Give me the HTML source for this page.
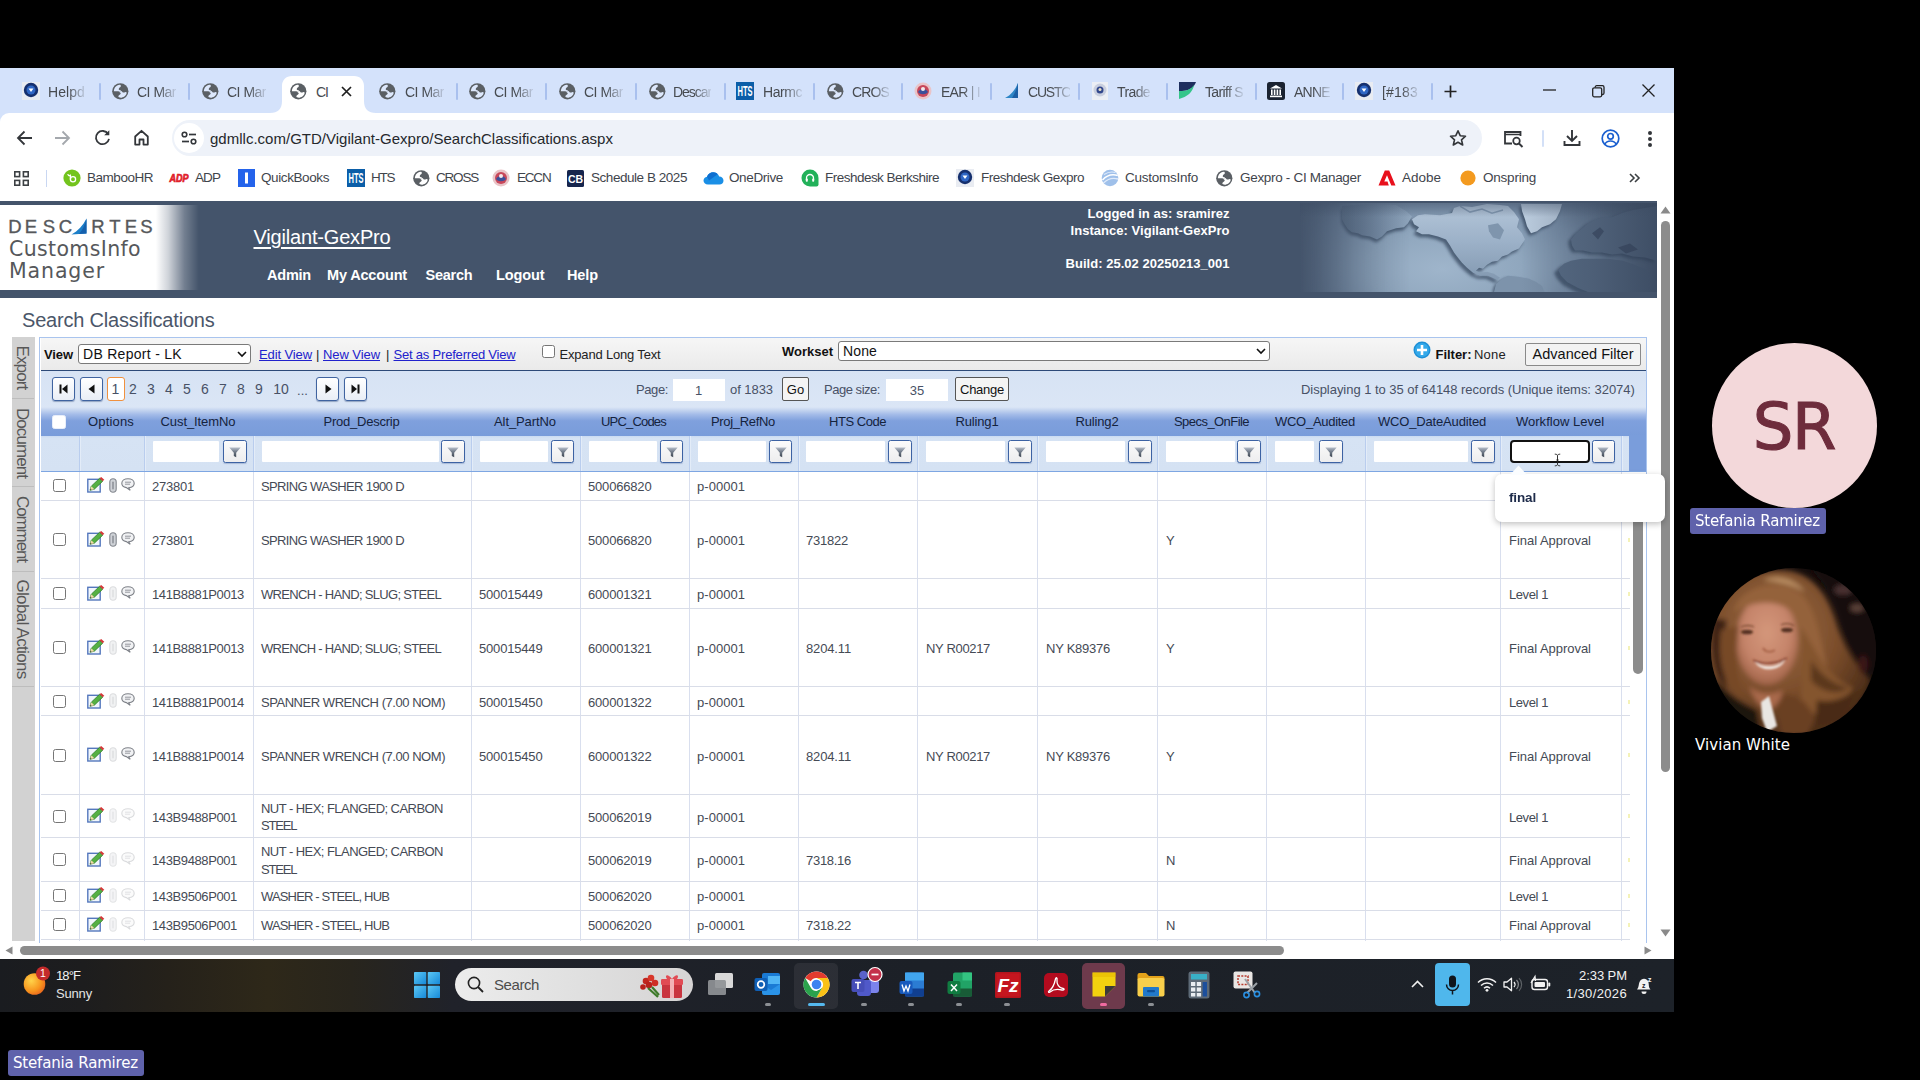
<!DOCTYPE html>
<html><head><meta charset="utf-8"><title>Search Classifications</title>
<style>
html,body{margin:0;padding:0;background:#000;}
body{position:relative;width:1920px;height:1080px;overflow:hidden;font-family:'Liberation Sans',sans-serif;}
div,span,svg{box-sizing:border-box;}
svg{position:absolute;overflow:visible;}
.cb{position:absolute;width:13px;height:13px;border:1.3px solid #767676;border-radius:2.5px;background:#fff;}
.fi{position:absolute;height:21px;background:#fff;border-radius:1px;}
.fb{position:absolute;width:23.500px;height:23px;border:1px solid #3c62a3;border-radius:2.500px;background:linear-gradient(#fbfbfb,#ededee);box-shadow:0 1px 1px rgba(60,90,150,.30);}
.vl{position:absolute;width:1px;background:#d6dcec;}
.hl{position:absolute;height:1px;background:#dcdfe8;}
</style></head><body>
<div style="position:absolute;left:0px;top:68px;width:1674px;height:60px;background:#d4e2fb;"></div>
<div style="position:absolute;left:0px;top:113px;width:1674px;height:88px;background:#fff;border-radius:9px 0 0 0;"></div>
<svg style='left:270px;top:76px' width='108' height='37' viewBox='0 0 108 37'><path d='M0 37 C8 37 12 33 12 25 V10 C12 4 16 0 22 0 H84 C90 0 94 4 94 10 V25 C94 33 98 37 106 37 Z' fill='#fff'/></svg>
<svg style='left:22px;top:82px' width='18' height='18' viewBox='0 0 18 18'><rect width='18' height='18' fill='#e9ecf2'/><circle cx='9' cy='8' r='7.2' fill='#16306e'/><circle cx='9' cy='8' r='4.5' fill='#2f66c4'/><path d='M6.500 6.500h5l-2.500 3.600z' fill='#fff'/></svg>
<span style="position:absolute;left:48.0px;top:82.5px;font:400 14px/18px 'Liberation Sans', sans-serif;color:#474b50;white-space:pre;letter-spacing:0.08px;-webkit-mask-image:linear-gradient(90deg,#000 55%,rgba(0,0,0,.15));mask-image:linear-gradient(90deg,#000 55%,rgba(0,0,0,.15));">Helpd</span>
<svg style='left:111.7px;top:82.7px' width='16.6' height='16.6' viewBox='0 0 17 17'><circle cx='8.500' cy='8.500' r='8.300' fill='#5a5f64'/><path d='M1.900 8.400C1.900 5.800 3.300 3.500 5.300 2.500 6.300 2 7.400 1.800 8.400 1.900 9.200 2.600 9.300 3.500 8.600 4.200 7.800 4.700 7 5.300 6.900 6.300 7 7 8 7.300 9 7.500 9.300 8 8.900 8.500 8.200 8.600 6.500 8.400 4 8.300 1.900 8.400Z' fill='#dde8fc'/><path d='M6.900 8.900C7.800 8.500 8.900 8.300 9.750 8.300 10.300 8.800 10.600 9.600 11.300 9.750 12.200 9.800 13 9.300 13.800 9.100 14.500 9.100 15 9.500 15.100 9.900 14.900 11.100 14.300 12.200 13.500 13.100 12.500 14.100 11.200 14.800 9.800 15 8.900 15.100 8 15 7.200 14.700 6.500 14.300 6.300 13.700 6.700 13.100 7.300 12.300 8.500 11.900 8.900 11 9 10.200 8.600 9.500 6.900 8.900Z' fill='#dde8fc'/></svg>
<span style="position:absolute;left:137.0px;top:82.5px;font:400 14px/18px 'Liberation Sans', sans-serif;color:#474b50;white-space:pre;letter-spacing:-0.50px;-webkit-mask-image:linear-gradient(90deg,#000 55%,rgba(0,0,0,.15));mask-image:linear-gradient(90deg,#000 55%,rgba(0,0,0,.15));">CI Mar</span>
<svg style='left:201.7px;top:82.7px' width='16.6' height='16.6' viewBox='0 0 17 17'><circle cx='8.500' cy='8.500' r='8.300' fill='#5a5f64'/><path d='M1.900 8.400C1.900 5.800 3.300 3.500 5.300 2.500 6.300 2 7.400 1.800 8.400 1.900 9.200 2.600 9.300 3.500 8.600 4.200 7.800 4.700 7 5.300 6.900 6.300 7 7 8 7.300 9 7.500 9.300 8 8.900 8.500 8.200 8.600 6.500 8.400 4 8.300 1.900 8.400Z' fill='#dde8fc'/><path d='M6.900 8.900C7.800 8.500 8.900 8.300 9.750 8.300 10.300 8.800 10.600 9.600 11.300 9.750 12.200 9.800 13 9.300 13.800 9.100 14.500 9.100 15 9.500 15.100 9.900 14.900 11.100 14.300 12.200 13.500 13.100 12.500 14.100 11.200 14.800 9.800 15 8.900 15.100 8 15 7.200 14.700 6.500 14.300 6.300 13.700 6.700 13.100 7.300 12.300 8.500 11.900 8.900 11 9 10.200 8.600 9.500 6.900 8.900Z' fill='#dde8fc'/></svg>
<span style="position:absolute;left:227.0px;top:82.5px;font:400 14px/18px 'Liberation Sans', sans-serif;color:#474b50;white-space:pre;letter-spacing:-0.50px;-webkit-mask-image:linear-gradient(90deg,#000 55%,rgba(0,0,0,.15));mask-image:linear-gradient(90deg,#000 55%,rgba(0,0,0,.15));">CI Mar</span>
<svg style='left:289.7px;top:82.7px' width='16.6' height='16.6' viewBox='0 0 17 17'><circle cx='8.500' cy='8.500' r='8.300' fill='#5a5f64'/><path d='M1.900 8.400C1.900 5.800 3.300 3.500 5.300 2.500 6.300 2 7.400 1.800 8.400 1.900 9.200 2.600 9.300 3.500 8.600 4.200 7.800 4.700 7 5.300 6.900 6.300 7 7 8 7.300 9 7.500 9.300 8 8.900 8.500 8.200 8.600 6.500 8.400 4 8.300 1.900 8.400Z' fill='#fff'/><path d='M6.900 8.900C7.800 8.500 8.900 8.300 9.750 8.300 10.300 8.800 10.600 9.600 11.300 9.750 12.200 9.800 13 9.300 13.800 9.100 14.500 9.100 15 9.500 15.100 9.900 14.900 11.100 14.300 12.200 13.500 13.100 12.500 14.100 11.200 14.800 9.800 15 8.900 15.100 8 15 7.200 14.700 6.500 14.300 6.300 13.700 6.700 13.100 7.300 12.300 8.500 11.900 8.900 11 9 10.200 8.600 9.500 6.900 8.900Z' fill='#fff'/></svg>
<span style="position:absolute;left:316.0px;top:82.5px;font:400 14px/18px 'Liberation Sans', sans-serif;color:#474b50;white-space:pre;letter-spacing:-1.00px;">CI</span>
<svg style='left:378.7px;top:82.7px' width='16.6' height='16.6' viewBox='0 0 17 17'><circle cx='8.500' cy='8.500' r='8.300' fill='#5a5f64'/><path d='M1.900 8.400C1.900 5.800 3.300 3.500 5.300 2.500 6.300 2 7.400 1.800 8.400 1.900 9.200 2.600 9.300 3.500 8.600 4.200 7.800 4.700 7 5.300 6.900 6.300 7 7 8 7.300 9 7.500 9.300 8 8.900 8.500 8.200 8.600 6.500 8.400 4 8.300 1.900 8.400Z' fill='#dde8fc'/><path d='M6.900 8.900C7.800 8.500 8.900 8.300 9.750 8.300 10.300 8.800 10.600 9.600 11.300 9.750 12.200 9.800 13 9.300 13.800 9.100 14.500 9.100 15 9.500 15.100 9.900 14.900 11.100 14.300 12.200 13.500 13.100 12.500 14.100 11.200 14.800 9.800 15 8.900 15.100 8 15 7.200 14.700 6.500 14.300 6.300 13.700 6.700 13.100 7.300 12.300 8.500 11.900 8.900 11 9 10.200 8.600 9.500 6.900 8.900Z' fill='#dde8fc'/></svg>
<span style="position:absolute;left:405.0px;top:82.5px;font:400 14px/18px 'Liberation Sans', sans-serif;color:#474b50;white-space:pre;letter-spacing:-0.50px;-webkit-mask-image:linear-gradient(90deg,#000 55%,rgba(0,0,0,.15));mask-image:linear-gradient(90deg,#000 55%,rgba(0,0,0,.15));">CI Mar</span>
<svg style='left:468.7px;top:82.7px' width='16.6' height='16.6' viewBox='0 0 17 17'><circle cx='8.500' cy='8.500' r='8.300' fill='#5a5f64'/><path d='M1.900 8.400C1.900 5.800 3.300 3.500 5.300 2.500 6.300 2 7.400 1.800 8.400 1.900 9.200 2.600 9.300 3.500 8.600 4.200 7.800 4.700 7 5.300 6.900 6.300 7 7 8 7.300 9 7.500 9.300 8 8.900 8.500 8.200 8.600 6.500 8.400 4 8.300 1.900 8.400Z' fill='#dde8fc'/><path d='M6.900 8.900C7.800 8.500 8.900 8.300 9.750 8.300 10.300 8.800 10.600 9.600 11.300 9.750 12.200 9.800 13 9.300 13.800 9.100 14.500 9.100 15 9.500 15.100 9.900 14.900 11.100 14.300 12.200 13.500 13.100 12.500 14.100 11.200 14.800 9.800 15 8.900 15.100 8 15 7.200 14.700 6.500 14.300 6.300 13.700 6.700 13.100 7.300 12.300 8.500 11.900 8.900 11 9 10.200 8.600 9.500 6.900 8.900Z' fill='#dde8fc'/></svg>
<span style="position:absolute;left:494.0px;top:82.5px;font:400 14px/18px 'Liberation Sans', sans-serif;color:#474b50;white-space:pre;letter-spacing:-0.50px;-webkit-mask-image:linear-gradient(90deg,#000 55%,rgba(0,0,0,.15));mask-image:linear-gradient(90deg,#000 55%,rgba(0,0,0,.15));">CI Mar</span>
<svg style='left:558.7px;top:82.7px' width='16.6' height='16.6' viewBox='0 0 17 17'><circle cx='8.500' cy='8.500' r='8.300' fill='#5a5f64'/><path d='M1.900 8.400C1.900 5.800 3.300 3.500 5.300 2.500 6.300 2 7.400 1.800 8.400 1.900 9.200 2.600 9.300 3.500 8.600 4.200 7.800 4.700 7 5.300 6.900 6.300 7 7 8 7.300 9 7.500 9.300 8 8.900 8.500 8.200 8.600 6.500 8.400 4 8.300 1.900 8.400Z' fill='#dde8fc'/><path d='M6.900 8.900C7.800 8.500 8.900 8.300 9.750 8.300 10.300 8.800 10.600 9.600 11.300 9.750 12.200 9.800 13 9.300 13.800 9.100 14.500 9.100 15 9.500 15.100 9.900 14.900 11.100 14.300 12.200 13.500 13.100 12.500 14.100 11.200 14.800 9.800 15 8.900 15.100 8 15 7.200 14.700 6.500 14.300 6.300 13.700 6.700 13.100 7.300 12.300 8.500 11.900 8.900 11 9 10.200 8.600 9.500 6.900 8.900Z' fill='#dde8fc'/></svg>
<span style="position:absolute;left:584.0px;top:82.5px;font:400 14px/18px 'Liberation Sans', sans-serif;color:#474b50;white-space:pre;letter-spacing:-0.50px;-webkit-mask-image:linear-gradient(90deg,#000 55%,rgba(0,0,0,.15));mask-image:linear-gradient(90deg,#000 55%,rgba(0,0,0,.15));">CI Mar</span>
<svg style='left:648.7px;top:82.7px' width='16.6' height='16.6' viewBox='0 0 17 17'><circle cx='8.500' cy='8.500' r='8.300' fill='#5a5f64'/><path d='M1.900 8.400C1.900 5.800 3.300 3.500 5.300 2.500 6.300 2 7.400 1.800 8.400 1.900 9.200 2.600 9.300 3.500 8.600 4.200 7.800 4.700 7 5.300 6.900 6.300 7 7 8 7.300 9 7.500 9.300 8 8.900 8.500 8.200 8.600 6.500 8.400 4 8.300 1.900 8.400Z' fill='#dde8fc'/><path d='M6.900 8.900C7.800 8.500 8.900 8.300 9.750 8.300 10.300 8.800 10.600 9.600 11.300 9.750 12.200 9.800 13 9.300 13.800 9.100 14.500 9.100 15 9.500 15.100 9.900 14.900 11.100 14.300 12.200 13.500 13.100 12.500 14.100 11.200 14.800 9.800 15 8.900 15.100 8 15 7.200 14.700 6.500 14.300 6.300 13.700 6.700 13.100 7.300 12.300 8.500 11.900 8.900 11 9 10.200 8.600 9.500 6.900 8.900Z' fill='#dde8fc'/></svg>
<span style="position:absolute;left:673.0px;top:82.5px;font:400 14px/18px 'Liberation Sans', sans-serif;color:#474b50;white-space:pre;letter-spacing:-1.06px;-webkit-mask-image:linear-gradient(90deg,#000 55%,rgba(0,0,0,.15));mask-image:linear-gradient(90deg,#000 55%,rgba(0,0,0,.15));">Descar</span>
<svg style='left:736px;top:82px' width='18' height='18' viewBox='0 0 18 18'><rect width='18' height='18' fill='#0b5ea8'/><text x='9' y='14' font-family='Liberation Sans, sans-serif' font-size='14' font-weight='700' fill='#fff' text-anchor='middle' textLength='15' lengthAdjust='spacingAndGlyphs'>HTS</text></svg>
<span style="position:absolute;left:763.0px;top:82.5px;font:400 14px/18px 'Liberation Sans', sans-serif;color:#474b50;white-space:pre;letter-spacing:-0.45px;-webkit-mask-image:linear-gradient(90deg,#000 55%,rgba(0,0,0,.15));mask-image:linear-gradient(90deg,#000 55%,rgba(0,0,0,.15));">Harmc</span>
<svg style='left:826.7px;top:82.7px' width='16.6' height='16.6' viewBox='0 0 17 17'><circle cx='8.500' cy='8.500' r='8.300' fill='#5a5f64'/><path d='M1.900 8.400C1.900 5.800 3.300 3.500 5.300 2.500 6.300 2 7.400 1.800 8.400 1.900 9.200 2.600 9.300 3.500 8.600 4.200 7.800 4.700 7 5.300 6.900 6.300 7 7 8 7.300 9 7.500 9.300 8 8.900 8.500 8.200 8.600 6.500 8.400 4 8.300 1.900 8.400Z' fill='#dde8fc'/><path d='M6.900 8.900C7.800 8.500 8.900 8.300 9.750 8.300 10.300 8.800 10.600 9.600 11.300 9.750 12.200 9.800 13 9.300 13.800 9.100 14.500 9.100 15 9.500 15.100 9.900 14.900 11.100 14.300 12.200 13.500 13.100 12.500 14.100 11.200 14.800 9.800 15 8.900 15.100 8 15 7.200 14.700 6.500 14.300 6.300 13.700 6.700 13.100 7.300 12.300 8.500 11.900 8.900 11 9 10.200 8.600 9.500 6.900 8.900Z' fill='#dde8fc'/></svg>
<span style="position:absolute;left:852.0px;top:82.5px;font:400 14px/18px 'Liberation Sans', sans-serif;color:#474b50;white-space:pre;letter-spacing:-0.86px;-webkit-mask-image:linear-gradient(90deg,#000 55%,rgba(0,0,0,.15));mask-image:linear-gradient(90deg,#000 55%,rgba(0,0,0,.15));">CROS</span>
<svg style='left:914px;top:82px' width='18' height='18' viewBox='0 0 18 18'><circle cx='9' cy='9' r='8.500' fill='#e9c4c8'/><circle cx='9' cy='9' r='6' fill='#c8475a'/><path d='M4 10c2-4 8-4 10 0-2 3-8 3-10 0z' fill='#3b4f9a'/><circle cx='9' cy='7' r='2' fill='#f3e9ea'/></svg>
<span style="position:absolute;left:941.0px;top:82.5px;font:400 14px/18px 'Liberation Sans', sans-serif;color:#474b50;white-space:pre;letter-spacing:-0.73px;-webkit-mask-image:linear-gradient(90deg,#000 55%,rgba(0,0,0,.15));mask-image:linear-gradient(90deg,#000 55%,rgba(0,0,0,.15));">EAR | I</span>
<svg style='left:1003px;top:82px' width='18' height='18' viewBox='0 0 18 18'><path d='M15 1 L15 16 L2 16 C8 13 12 8 15 1z' fill='#2f86c6'/><path d='M15 1 L15 16 L9 16 C12 11 14 6 15 1z' fill='#1d5fa5'/></svg>
<span style="position:absolute;left:1028.0px;top:82.5px;font:400 14px/18px 'Liberation Sans', sans-serif;color:#474b50;white-space:pre;letter-spacing:-1.20px;-webkit-mask-image:linear-gradient(90deg,#000 55%,rgba(0,0,0,.15));mask-image:linear-gradient(90deg,#000 55%,rgba(0,0,0,.15));">CUSTC</span>
<svg style='left:1092px;top:82px' width='16' height='18' viewBox='0 0 16 18'><rect width='16' height='18' fill='#eceff5'/><circle cx='8' cy='8' r='6.500' fill='#c9cfdf'/><circle cx='8' cy='8' r='3.500' fill='#32478c'/><circle cx='8' cy='7.500' r='1.500' fill='#e8e1c8'/></svg>
<span style="position:absolute;left:1117.0px;top:82.5px;font:400 14px/18px 'Liberation Sans', sans-serif;color:#474b50;white-space:pre;letter-spacing:-0.61px;-webkit-mask-image:linear-gradient(90deg,#000 55%,rgba(0,0,0,.15));mask-image:linear-gradient(90deg,#000 55%,rgba(0,0,0,.15));">Trade</span>
<svg style='left:1178px;top:81px' width='19' height='20' viewBox='0 0 19 20'><path d='M1 1h17c-2 6-8 9-14 9H1z' fill='#1e2f5e'/><path d='M1 10h3c5 0 9-2 12-6-1 7-7 12-15 14z' fill='#35c58a'/></svg>
<span style="position:absolute;left:1205.0px;top:82.5px;font:400 14px/18px 'Liberation Sans', sans-serif;color:#474b50;white-space:pre;letter-spacing:-0.66px;-webkit-mask-image:linear-gradient(90deg,#000 55%,rgba(0,0,0,.15));mask-image:linear-gradient(90deg,#000 55%,rgba(0,0,0,.15));">Tariff S</span>
<svg style='left:1267px;top:82px' width='18' height='18' viewBox='0 0 18 18'><rect width='18' height='18' rx='2.500' fill='#1b2331'/><path d='M3 6.500 9 3l6 3.500z' fill='#fff'/><g fill='#fff'><rect x='4' y='7.500' width='1.600' height='5.500'/><rect x='6.800' y='7.500' width='1.600' height='5.500'/><rect x='9.600' y='7.500' width='1.600' height='5.500'/><rect x='12.400' y='7.500' width='1.600' height='5.500'/><rect x='3' y='13.600' width='12' height='1.600'/></g></svg>
<span style="position:absolute;left:1294.0px;top:82.5px;font:400 14px/18px 'Liberation Sans', sans-serif;color:#474b50;white-space:pre;letter-spacing:-0.73px;-webkit-mask-image:linear-gradient(90deg,#000 55%,rgba(0,0,0,.15));mask-image:linear-gradient(90deg,#000 55%,rgba(0,0,0,.15));">ANNE</span>
<svg style='left:1355px;top:82px' width='18' height='18' viewBox='0 0 18 18'><rect width='18' height='18' fill='#e9ecf2'/><circle cx='9' cy='8' r='7.2' fill='#16306e'/><circle cx='9' cy='8' r='4.5' fill='#2f66c4'/><path d='M6.500 6.500h5l-2.500 3.600z' fill='#fff'/></svg>
<span style="position:absolute;left:1382.0px;top:82.5px;font:400 14px/18px 'Liberation Sans', sans-serif;color:#474b50;white-space:pre;letter-spacing:0.19px;-webkit-mask-image:linear-gradient(90deg,#000 55%,rgba(0,0,0,.15));mask-image:linear-gradient(90deg,#000 55%,rgba(0,0,0,.15));">[#183</span>
<div style="position:absolute;left:99px;top:83px;width:2px;height:17px;background:#a9c0ee;border-radius:1px;"></div>
<div style="position:absolute;left:188px;top:83px;width:2px;height:17px;background:#a9c0ee;border-radius:1px;"></div>
<div style="position:absolute;left:456px;top:83px;width:2px;height:17px;background:#a9c0ee;border-radius:1px;"></div>
<div style="position:absolute;left:545px;top:83px;width:2px;height:17px;background:#a9c0ee;border-radius:1px;"></div>
<div style="position:absolute;left:635px;top:83px;width:2px;height:17px;background:#a9c0ee;border-radius:1px;"></div>
<div style="position:absolute;left:724px;top:83px;width:2px;height:17px;background:#a9c0ee;border-radius:1px;"></div>
<div style="position:absolute;left:813px;top:83px;width:2px;height:17px;background:#a9c0ee;border-radius:1px;"></div>
<div style="position:absolute;left:901px;top:83px;width:2px;height:17px;background:#a9c0ee;border-radius:1px;"></div>
<div style="position:absolute;left:990px;top:83px;width:2px;height:17px;background:#a9c0ee;border-radius:1px;"></div>
<div style="position:absolute;left:1078px;top:83px;width:2px;height:17px;background:#a9c0ee;border-radius:1px;"></div>
<div style="position:absolute;left:1166px;top:83px;width:2px;height:17px;background:#a9c0ee;border-radius:1px;"></div>
<div style="position:absolute;left:1255px;top:83px;width:2px;height:17px;background:#a9c0ee;border-radius:1px;"></div>
<div style="position:absolute;left:1342px;top:83px;width:2px;height:17px;background:#a9c0ee;border-radius:1px;"></div>
<div style="position:absolute;left:1431px;top:83px;width:2px;height:17px;background:#a9c0ee;border-radius:1px;"></div>
<svg style='left:341px;top:86px' width='11' height='11' viewBox='0 0 11 11'><path d='M1 1 10 10M10 1 1 10' stroke='#1f1f1f' stroke-width='1.700' fill='none'/></svg>
<svg style='left:1444px;top:85px' width='13' height='13' viewBox='0 0 13 13'><path d='M6.500 0.500V12.500M0.500 6.500H12.500' stroke='#222' stroke-width='1.700' fill='none'/></svg>
<svg style='left:1543px;top:89px' width='13' height='2' viewBox='0 0 13 2'><path d='M0 1H13' stroke='#222' stroke-width='1.300'/></svg>
<svg style='left:1592px;top:85px' width='13' height='13' viewBox='0 0 13 13'><rect x='0.700' y='2.800' width='9' height='9' rx='1.500' fill='none' stroke='#222' stroke-width='1.300'/><path d='M3.200 2.600V2.200A1.500 1.500 0 0 1 4.700 0.700H10.500A1.500 1.500 0 0 1 12 2.200V8A1.500 1.500 0 0 1 10.500 9.500H10' fill='none' stroke='#222' stroke-width='1.300'/></svg>
<svg style='left:1642px;top:84px' width='13' height='13' viewBox='0 0 13 13'><path d='M0.500 0.500 12.500 12.500M12.500 0.500 0.500 12.500' stroke='#222' stroke-width='1.300' fill='none'/></svg>
<svg style='left:16px;top:130px' width='17' height='16' viewBox='0 0 17 16'><path d='M16 8H2.500M8.500 1.500 2 8l6.500 6.500' stroke='#33363a' stroke-width='1.800' fill='none'/></svg>
<svg style='left:54px;top:130px' width='17' height='16' viewBox='0 0 17 16'><path d='M1 8H14.500M8.500 1.500 15 8l-6.500 6.500' stroke='#a4a8ad' stroke-width='1.800' fill='none'/></svg>
<svg style='left:94px;top:129px' width='17' height='17' viewBox='0 0 17 17'><path d='M14.200 5.200A6.600 6.600 0 1 0 15 9.800' stroke='#33363a' stroke-width='1.800' fill='none'/><path d='M15.300 1.200V6.300H10.200z' fill='#33363a'/></svg>
<svg style='left:133px;top:129px' width='17' height='17' viewBox='0 0 17 17'><path d='M2.200 7.500 8.500 1.800 14.800 7.500V15.600H10.500V10.500H6.500V15.600H2.200Z' stroke='#33363a' stroke-width='1.800' fill='none' stroke-linejoin='round'/></svg>
<div style="position:absolute;left:172px;top:120px;width:1310px;height:36px;background:#eef2f9;border-radius:18px;"></div>
<div style="position:absolute;left:174px;top:123px;width:30px;height:30px;background:#fff;border-radius:15px;"></div>
<svg style='left:181px;top:131px' width='16' height='14' viewBox='0 0 16 14'><circle cx='3.500' cy='3.500' r='2.300' fill='none' stroke='#33363a' stroke-width='1.600'/><path d='M8 3.500H15' stroke='#33363a' stroke-width='1.700'/><circle cx='12.500' cy='10.500' r='2.300' fill='none' stroke='#33363a' stroke-width='1.600'/><path d='M1 10.500H8' stroke='#33363a' stroke-width='1.700'/></svg>
<span style="position:absolute;left:210.0px;top:129.0px;font:400 15px/20px 'Liberation Sans', sans-serif;color:#25282c;white-space:pre;letter-spacing:0.01px;">gdmllc.com/GTD/Vigilant-Gexpro/SearchClassifications.aspx</span>
<svg style='left:1449px;top:129px' width='18' height='18' viewBox='0 0 18 18'><path d='M9 1.800 11.200 6.700 16.500 7.200 12.500 10.800 13.700 16 9 13.200 4.300 16 5.500 10.800 1.500 7.200 6.800 6.700Z' fill='none' stroke='#33363a' stroke-width='1.600' stroke-linejoin='round'/></svg>
<svg style='left:1503px;top:130px' width='21' height='18' viewBox='0 0 21 18'><path d='M9 13.500H2V2H17.500V6' fill='none' stroke='#33363a' stroke-width='1.800'/><path d='M2 4.500H17' stroke='#33363a' stroke-width='1.500'/><circle cx='13.500' cy='11' r='3.300' fill='none' stroke='#33363a' stroke-width='1.700'/><path d='M16 13.500 19.500 17' stroke='#33363a' stroke-width='1.900'/></svg>
<div style="position:absolute;left:1542px;top:130px;width:2px;height:17px;background:#d3e0f7;border-radius:1px;"></div>
<svg style='left:1563px;top:129px' width='18' height='18' viewBox='0 0 18 18'><path d='M9 1V11.500M4 7 9 12 14 7' stroke='#33363a' stroke-width='1.900' fill='none'/><path d='M1.500 12V16H16.500V12' stroke='#33363a' stroke-width='1.900' fill='none'/></svg>
<svg style='left:1601px;top:129px' width='19' height='19' viewBox='0 0 19 19'><circle cx='9.500' cy='9.500' r='8.300' fill='none' stroke='#1a5fd0' stroke-width='1.700'/><circle cx='9.500' cy='7.300' r='2.800' fill='none' stroke='#1a5fd0' stroke-width='1.700'/><path d='M3.800 15.300C5 12.800 7 12 9.500 12S14 12.800 15.200 15.300' fill='none' stroke='#1a5fd0' stroke-width='1.700'/></svg>
<div style="position:absolute;left:1648px;top:131px;width:4px;height:4px;background:#33363a;border-radius:2px;"></div>
<div style="position:absolute;left:1648px;top:137px;width:4px;height:4px;background:#33363a;border-radius:2px;"></div>
<div style="position:absolute;left:1648px;top:143px;width:4px;height:4px;background:#33363a;border-radius:2px;"></div>
<svg style='left:14px;top:171px' width='15' height='15' viewBox='0 0 15 15'><g fill='none' stroke='#3c4043' stroke-width='1.600'><rect x='0.800' y='0.800' width='4.800' height='4.800'/><rect x='9.400' y='0.800' width='4.800' height='4.800'/><rect x='0.800' y='9.400' width='4.800' height='4.800'/><rect x='9.400' y='9.400' width='4.800' height='4.800'/></g></svg>
<div style="position:absolute;left:46px;top:170px;width:1px;height:17px;background:#c9d7f2;"></div>
<svg style='left:63px;top:169px' width='18' height='18' viewBox='0 0 18 18'><circle cx='9' cy='9' r='8.600' fill='#73c41d'/><circle cx='10' cy='10.300' r='2.600' fill='none' stroke='#fff' stroke-width='1.300'/><path d='M7.400 10.500V5.500M7.400 7C6 7 5 6.300 4.700 5.200' stroke='#fff' stroke-width='1.300' fill='none'/></svg>
<span style="position:absolute;left:87.0px;top:169.0px;font:400 13.5px/18px 'Liberation Sans', sans-serif;color:#3f454c;white-space:pre;letter-spacing:-0.47px;">BambooHR</span>
<svg style='left:169px;top:172px' width='21' height='12' viewBox='0 0 21 12'><text x='10' y='10' font-family='Liberation Sans, sans-serif' font-size='10.500' font-weight='700' font-style='italic' fill='#e0202a' stroke='#e0202a' stroke-width='0.700' text-anchor='middle' textLength='19' lengthAdjust='spacingAndGlyphs'>ADP</text></svg>
<span style="position:absolute;left:195.0px;top:169.0px;font:400 13.5px/18px 'Liberation Sans', sans-serif;color:#3f454c;white-space:pre;letter-spacing:-0.92px;">ADP</span>
<svg style='left:238px;top:169px' width='17' height='18' viewBox='0 0 17 18'><rect width='17' height='18' fill='#2463eb'/><rect x='7' y='3.500' width='3' height='11' fill='#fff'/></svg>
<span style="position:absolute;left:261.0px;top:169.0px;font:400 13.5px/18px 'Liberation Sans', sans-serif;color:#3f454c;white-space:pre;letter-spacing:-0.40px;">QuickBooks</span>
<svg style='left:347px;top:169px' width='18' height='18' viewBox='0 0 18 18'><rect width='18' height='18' fill='#0b5ea8'/><text x='9' y='14' font-family='Liberation Sans, sans-serif' font-size='14' font-weight='700' fill='#fff' text-anchor='middle' textLength='15' lengthAdjust='spacingAndGlyphs'>HTS</text></svg>
<span style="position:absolute;left:371.0px;top:169.0px;font:400 13.5px/18px 'Liberation Sans', sans-serif;color:#3f454c;white-space:pre;letter-spacing:-1.20px;">HTS</span>
<svg style='left:412.7px;top:169.7px' width='16.6' height='16.6' viewBox='0 0 17 17'><circle cx='8.500' cy='8.500' r='8.300' fill='#5a5f64'/><path d='M1.900 8.400C1.900 5.800 3.300 3.500 5.300 2.500 6.300 2 7.400 1.800 8.400 1.900 9.200 2.600 9.300 3.500 8.600 4.200 7.800 4.700 7 5.300 6.900 6.300 7 7 8 7.300 9 7.500 9.300 8 8.900 8.500 8.200 8.600 6.500 8.400 4 8.300 1.900 8.400Z' fill='#fff'/><path d='M6.900 8.900C7.800 8.500 8.900 8.300 9.750 8.300 10.300 8.800 10.600 9.600 11.300 9.750 12.200 9.800 13 9.300 13.800 9.100 14.500 9.100 15 9.500 15.100 9.900 14.900 11.100 14.300 12.200 13.500 13.100 12.500 14.100 11.200 14.800 9.800 15 8.900 15.100 8 15 7.200 14.700 6.500 14.300 6.300 13.700 6.700 13.100 7.300 12.300 8.500 11.900 8.900 11 9 10.200 8.600 9.500 6.900 8.900Z' fill='#fff'/></svg>
<span style="position:absolute;left:436.0px;top:169.0px;font:400 13.5px/18px 'Liberation Sans', sans-serif;color:#3f454c;white-space:pre;letter-spacing:-1.20px;">CROSS</span>
<svg style='left:492px;top:169px' width='18' height='18' viewBox='0 0 18 18'><circle cx='9' cy='9' r='8.500' fill='#e9c4c8'/><circle cx='9' cy='9' r='6' fill='#c8475a'/><path d='M4 10c2-4 8-4 10 0-2 3-8 3-10 0z' fill='#3b4f9a'/><circle cx='9' cy='7' r='2' fill='#f3e9ea'/></svg>
<span style="position:absolute;left:517.0px;top:169.0px;font:400 13.5px/18px 'Liberation Sans', sans-serif;color:#3f454c;white-space:pre;letter-spacing:-1.20px;">ECCN</span>
<svg style='left:567px;top:170px' width='17' height='17' viewBox='0 0 17 17'><rect width='17' height='17' rx='1.500' fill='#16254d'/><text x='8.500' y='12.800' font-family='Liberation Sans, sans-serif' font-size='10.500' font-weight='700' fill='#fff' text-anchor='middle'>CB</text></svg>
<span style="position:absolute;left:591.0px;top:169.0px;font:400 13.5px/18px 'Liberation Sans', sans-serif;color:#3f454c;white-space:pre;letter-spacing:-0.46px;">Schedule B 2025</span>
<svg style='left:703px;top:171px' width='21' height='14' viewBox='0 0 21 14'><path d='M5 13.500C2.200 13.500 0.500 11.600 0.500 9.500 0.500 7.500 2 5.900 4 5.700 5 3 7.500 1.300 10.200 1.300 13 1.300 15.300 3 16.200 5.600 18.800 5.700 20.500 7.500 20.500 9.700 20.500 11.900 18.800 13.500 16.500 13.500Z' fill='#1a8fe6'/><path d='M4 5.700C5 3 7.500 1.300 10.200 1.300 12 1.300 13.600 2 14.700 3.200L6 9.500Z' fill='#0f6fd0'/></svg>
<span style="position:absolute;left:729.0px;top:169.0px;font:400 13.5px/18px 'Liberation Sans', sans-serif;color:#3f454c;white-space:pre;letter-spacing:-0.38px;">OneDrive</span>
<svg style='left:801px;top:169px' width='18' height='18' viewBox='0 0 18 18'><path d='M9 0.500A8.500 8.500 0 0 1 17.500 9V15.500A2 2 0 0 1 15.500 17.500H9A8.500 8.500 0 0 1 9 0.500Z' fill='#22b15a'/><path d='M5.500 10.500V9A3.500 3.500 0 0 1 12.500 9V10.500' stroke='#fff' stroke-width='1.300' fill='none'/><rect x='4.800' y='9.500' width='2' height='3.300' rx='0.800' fill='#fff'/><rect x='11.200' y='9.500' width='2' height='3.300' rx='0.800' fill='#fff'/></svg>
<span style="position:absolute;left:825.0px;top:169.0px;font:400 13.5px/18px 'Liberation Sans', sans-serif;color:#3f454c;white-space:pre;letter-spacing:-0.52px;">Freshdesk Berkshire</span>
<svg style='left:956px;top:169px' width='18' height='18' viewBox='0 0 18 18'><rect width='18' height='18' fill='#e9ecf2'/><circle cx='9' cy='8' r='7.2' fill='#16306e'/><circle cx='9' cy='8' r='4.5' fill='#2f66c4'/><path d='M6.500 6.500h5l-2.500 3.600z' fill='#fff'/></svg>
<span style="position:absolute;left:981.0px;top:169.0px;font:400 13.5px/18px 'Liberation Sans', sans-serif;color:#3f454c;white-space:pre;letter-spacing:-0.50px;">Freshdesk Gexpro</span>
<svg style='left:1101px;top:169px' width='18' height='18' viewBox='0 0 18 18'><circle cx='9' cy='9' r='8.300' fill='#9fc0ea'/><path d='M1.500 11C6 6 12 5 16.800 6.500' stroke='#fff' stroke-width='1.600' fill='none'/><path d='M2.500 14C7 9.500 12 8.500 17 10' stroke='#dfeafa' stroke-width='1.400' fill='none'/><path d='M3 5.500C7 3 11 2.500 14.500 3.500' stroke='#dfeafa' stroke-width='1.200' fill='none'/></svg>
<span style="position:absolute;left:1125.0px;top:169.0px;font:400 13.5px/18px 'Liberation Sans', sans-serif;color:#3f454c;white-space:pre;letter-spacing:-0.25px;">CustomsInfo</span>
<svg style='left:1215.7px;top:169.7px' width='16.6' height='16.6' viewBox='0 0 17 17'><circle cx='8.500' cy='8.500' r='8.300' fill='#5a5f64'/><path d='M1.900 8.400C1.900 5.800 3.300 3.500 5.300 2.500 6.300 2 7.400 1.800 8.400 1.900 9.200 2.600 9.300 3.500 8.600 4.200 7.800 4.700 7 5.300 6.900 6.300 7 7 8 7.300 9 7.500 9.300 8 8.900 8.500 8.200 8.600 6.500 8.400 4 8.300 1.900 8.400Z' fill='#fff'/><path d='M6.900 8.900C7.800 8.500 8.900 8.300 9.750 8.300 10.300 8.800 10.600 9.600 11.300 9.750 12.200 9.800 13 9.300 13.800 9.100 14.500 9.100 15 9.500 15.100 9.900 14.900 11.100 14.300 12.200 13.500 13.100 12.500 14.100 11.200 14.800 9.800 15 8.900 15.100 8 15 7.200 14.700 6.500 14.300 6.300 13.700 6.700 13.100 7.300 12.300 8.500 11.900 8.900 11 9 10.200 8.600 9.500 6.900 8.900Z' fill='#fff'/></svg>
<span style="position:absolute;left:1240.0px;top:169.0px;font:400 13.5px/18px 'Liberation Sans', sans-serif;color:#3f454c;white-space:pre;letter-spacing:-0.31px;">Gexpro - CI Manager</span>
<svg style='left:1378px;top:170px' width='18' height='16' viewBox='0 0 18 16'><path d='M6.800 0.500H11.200L17.500 15.500H13.300L9 5.200 6.300 11.500H9.500L10.800 15.500H0.500Z' fill='#e8101c'/></svg>
<span style="position:absolute;left:1402.0px;top:169.0px;font:400 13.5px/18px 'Liberation Sans', sans-serif;color:#3f454c;white-space:pre;letter-spacing:-0.01px;">Adobe</span>
<svg style='left:1460px;top:170px' width='16' height='16' viewBox='0 0 16 16'><circle cx='8' cy='8' r='7.600' fill='#f39a1f'/></svg>
<span style="position:absolute;left:1483.0px;top:169.0px;font:400 13.5px/18px 'Liberation Sans', sans-serif;color:#3f454c;white-space:pre;letter-spacing:-0.22px;">Onspring</span>
<svg style='left:1629px;top:173px' width='11' height='10' viewBox='0 0 11 10'><path d='M1 1 5 5 1 9M6 1 10 5 6 9' stroke='#3c4043' stroke-width='1.600' fill='none'/></svg>
<div style="position:absolute;left:0px;top:201px;width:1674px;height:758px;background:#fff;"></div>
<div style="position:absolute;left:0px;top:200.5px;width:1657px;height:97px;background:#44546b;"></div>
<div style="position:absolute;left:0px;top:205px;width:205px;height:85px;background:linear-gradient(90deg,#fff 0,#fff 76%,rgba(255,255,255,.75) 82%,rgba(255,255,255,.25) 90%,rgba(255,255,255,0) 97%);"></div>
<span style="position:absolute;left:8.3px;top:216.5px;font:400 18.5px/20px 'Liberation Sans', sans-serif;color:#56585b;white-space:pre;-webkit-text-stroke:0.350px #56585b;">D</span>
<span style="position:absolute;left:24.8px;top:216.5px;font:400 18.5px/20px 'Liberation Sans', sans-serif;color:#56585b;white-space:pre;-webkit-text-stroke:0.350px #56585b;">E</span>
<span style="position:absolute;left:42.8px;top:216.5px;font:400 18.5px/20px 'Liberation Sans', sans-serif;color:#56585b;white-space:pre;-webkit-text-stroke:0.350px #56585b;">S</span>
<span style="position:absolute;left:58.8px;top:216.5px;font:400 18.5px/20px 'Liberation Sans', sans-serif;color:#56585b;white-space:pre;-webkit-text-stroke:0.350px #56585b;">C</span>
<span style="position:absolute;left:91.3px;top:216.5px;font:400 18.5px/20px 'Liberation Sans', sans-serif;color:#56585b;white-space:pre;-webkit-text-stroke:0.350px #56585b;">R</span>
<span style="position:absolute;left:109.3px;top:216.5px;font:400 18.5px/20px 'Liberation Sans', sans-serif;color:#56585b;white-space:pre;-webkit-text-stroke:0.350px #56585b;">T</span>
<span style="position:absolute;left:124.8px;top:216.5px;font:400 18.5px/20px 'Liberation Sans', sans-serif;color:#56585b;white-space:pre;-webkit-text-stroke:0.350px #56585b;">E</span>
<span style="position:absolute;left:140.3px;top:216.5px;font:400 18.5px/20px 'Liberation Sans', sans-serif;color:#56585b;white-space:pre;-webkit-text-stroke:0.350px #56585b;">S</span>
<svg style='left:71px;top:218px' width='16' height='17' viewBox='0 0 16 17'><path d='M15.500 0.500V15.500L0.500 16.500C7 13 12 7.500 15.500 0.500Z' fill='#1c7fc9'/><path d='M15.500 0.500V15.500L8 16C11.500 12 14 7 15.500 0.500Z' fill='#1560ad'/></svg>
<span style="position:absolute;left:9.0px;top:236.5px;font:400 20.5px/24px 'DejaVu Sans', 'Liberation Sans', sans-serif;color:#56585b;white-space:pre;letter-spacing:0.36px;">CustomsInfo</span>
<span style="position:absolute;left:9.0px;top:259.0px;font:400 20.5px/24px 'DejaVu Sans', 'Liberation Sans', sans-serif;color:#56585b;white-space:pre;letter-spacing:0.88px;">Manager</span>
<span style="position:absolute;left:253.5px;top:223.5px;font:400 20px/26px 'Liberation Sans', sans-serif;color:#fff;white-space:pre;letter-spacing:-0.18px;text-decoration:underline;text-underline-offset:3px;text-decoration-thickness:1.500px;">Vigilant-GexPro</span>
<span style="position:absolute;left:267.0px;top:265.5px;font:700 14.5px/19px 'Liberation Sans', sans-serif;color:#fff;white-space:pre;letter-spacing:-0.22px;">Admin</span>
<span style="position:absolute;left:327.0px;top:265.5px;font:700 14.5px/19px 'Liberation Sans', sans-serif;color:#fff;white-space:pre;letter-spacing:-0.16px;">My Account</span>
<span style="position:absolute;left:425.5px;top:265.5px;font:700 14.5px/19px 'Liberation Sans', sans-serif;color:#fff;white-space:pre;letter-spacing:-0.23px;">Search</span>
<span style="position:absolute;left:496.0px;top:265.5px;font:700 14.5px/19px 'Liberation Sans', sans-serif;color:#fff;white-space:pre;letter-spacing:-0.10px;">Logout</span>
<span style="position:absolute;left:567.0px;top:265.5px;font:700 14.5px/19px 'Liberation Sans', sans-serif;color:#fff;white-space:pre;letter-spacing:-0.11px;">Help</span>
<span style="position:absolute;left:1087.5px;top:205.0px;font:700 13px/17px 'Liberation Sans', sans-serif;color:#fff;white-space:pre;letter-spacing:0.02px;">Logged in as: sramirez</span>
<span style="position:absolute;left:1070.5px;top:222.0px;font:700 13px/17px 'Liberation Sans', sans-serif;color:#fff;white-space:pre;letter-spacing:0.04px;">Instance: Vigilant-GexPro</span>
<span style="position:absolute;left:1065.5px;top:255.0px;font:700 13px/17px 'Liberation Sans', sans-serif;color:#fff;white-space:pre;letter-spacing:0.03px;">Build: 25.02 20250213_001</span>
<div style='position:absolute;left:1300px;top:203px;width:357px;height:89px;overflow:hidden;background:radial-gradient(ellipse 68% 130% at 40% 74%,#9fb5cb 0,#90a7be 32%,#788ea7 60%,#5b6e86 84%,#47586f 100%);'><svg style='left:0;top:0' width='357' height='89' viewBox='0 0 357 88' preserveAspectRatio='none'><defs><linearGradient id='mg' x1='0' y1='0' x2='0' y2='1'><stop offset='0' stop-color='#b4c6d9'/><stop offset='.5' stop-color='#9cb1c8'/><stop offset='1' stop-color='#8399b1'/></linearGradient><linearGradient id='mg2' x1='0' y1='0' x2='1' y2='0'><stop offset='0' stop-color='#5d7189'/><stop offset='.5' stop-color='#768ca5'/><stop offset='1' stop-color='#90a6bd'/></linearGradient><filter id='mb' x='-10%' y='-10%' width='120%' height='120%'><feGaussianBlur stdDeviation='0.700'/></filter><filter id='ms' x='-10%' y='-10%' width='120%' height='120%'><feGaussianBlur stdDeviation='1.600'/></filter></defs><g filter='url(#ms)' fill='#2f3f56' opacity='.700'><path d='M112 16 118 12 125 11 140 12 152 10 154 5 160 3 172 4 187 1 200 2 208 3 214 9 219 16 217 24 222 30 225 36 221 42 219 45 212 48 208 51 202 53 198 57 192 58 187 61 183 65 179 64 176 67 180 69 187 68 194 70 200 74 197 76 188 72 180 72 173 69 167 64 162 59 157 53 154 49 150 42 146 36 138 33 129 31 122 31 116 28 119 24 114 21Z' transform='translate(-2.500,3)'/><path d='M42 3 67 1 96 2 106 8 112 13 108 20 104 24 96 25 87 28 82 33 77 36 70 33 62 32 58 30 52 29 48 26 44 20 42 16Z' transform='translate(-1,3)'/><path d='M258 66 264 60 271 57 282 55 292 55 308 55 323 57 335 61 346 66 352 72 357 78 357 88 288 88 278 84 267 78 261 72Z' transform='translate(-4,3)'/><path d='M271 36 276 30 281 26 288 20 296 16 304 14 312 14 322 10 333 7 345 5 357 3 357 57 345 54 333 53 322 50 312 51 302 49 292 49 283 47 275 47 272 42Z' transform='translate(-3,2)'/><path d='M196 80 202 75 208 72 218 73 229 75 236 78 242 82 244 88 194 88Z' transform='translate(-2,2)'/><path d='M221 1 262 1 260 8 256 16 250 21 242 24 237 28 231 30 227 23 225 16 222 8Z' transform='translate(-2,2.500)'/></g><g filter='url(#mb)'><path d='M42 3 67 1 96 2 106 8 112 13 108 20 104 24 96 25 87 28 82 33 77 36 70 33 62 32 58 30 52 29 48 26 44 20 42 16Z' fill='url(#mg2)'/><path d='M112 16 118 12 125 11 140 12 152 10 154 5 160 3 172 4 187 1 200 2 208 3 214 9 219 16 217 24 222 30 225 36 221 42 219 45 212 48 208 51 202 53 198 57 192 58 187 61 183 65 179 64 176 67 180 69 187 68 194 70 200 74 197 76 188 72 180 72 173 69 167 64 162 59 157 53 154 49 150 42 146 36 138 33 129 31 122 31 116 28 119 24 114 21Z' fill='url(#mg)'/><path d='M221 1 262 1 260 8 256 16 250 21 242 24 237 28 231 30 227 23 225 16 222 8Z' fill='#bccddf'/><path d='M196 80 202 75 208 72 218 73 229 75 236 78 242 82 244 88 194 88Z' fill='#7d93ab'/><path d='M271 36 276 30 281 26 288 20 296 16 304 14 312 14 322 10 333 7 345 5 357 3 357 57 345 54 333 53 322 50 312 51 302 49 292 49 283 47 275 47 272 42Z' fill='#5c7089'/><path d='M258 66 264 60 271 57 282 55 292 55 308 55 323 57 335 61 346 66 352 72 357 78 357 88 288 88 278 84 267 78 261 72Z' fill='#586c85'/><path d='M188 22 198 20 204 27 200 36 193 34 189 28Z' fill='#7f95ad'/><path d='M160 3 170 9 182 6 192 10 203 7' stroke='#8197af' stroke-width='1.500' fill='none'/><path d='M292 30 300 24 304 28 298 36ZM318 44 330 40 338 46 326 50Z' fill='#3f5068'/></g></svg><div style='position:absolute;left:0;top:0;width:357px;height:89px;background:linear-gradient(90deg,rgba(60,75,98,0) 62%,rgba(56,70,92,.350) 82%,rgba(50,64,86,.700) 100%);'></div><div style='position:absolute;left:0;top:0;width:110px;height:89px;background:linear-gradient(90deg,#44546b 0,rgba(68,84,107,.800) 18%,rgba(68,84,107,.400) 50%,rgba(68,84,107,.120) 80%,rgba(68,84,107,0));'></div><div style='position:absolute;left:0;top:0;width:357px;height:14px;background:linear-gradient(180deg,rgba(60,75,98,.450),rgba(60,75,98,0));'></div></div>
<span style="position:absolute;left:22.0px;top:306.5px;font:400 20px/26px 'Liberation Sans', sans-serif;color:#4b5669;white-space:pre;letter-spacing:-0.19px;">Search Classifications</span>
<div style="position:absolute;left:11.7px;top:337px;width:23.3px;height:604px;background:#d2d2d2;"></div>
<span style="position:absolute;left:0.0px;top:0.0px;font:400 17px/22px 'Liberation Sans', sans-serif;color:#575757;white-space:pre;letter-spacing:-0.86px;transform-origin:0 0;transform:translate(32.500px,345.5px) rotate(90deg);">Export</span>
<span style="position:absolute;left:0.0px;top:0.0px;font:400 17px/22px 'Liberation Sans', sans-serif;color:#575757;white-space:pre;letter-spacing:-0.94px;transform-origin:0 0;transform:translate(32.500px,408.0px) rotate(90deg);">Document</span>
<span style="position:absolute;left:0.0px;top:0.0px;font:400 17px/22px 'Liberation Sans', sans-serif;color:#575757;white-space:pre;letter-spacing:-1.10px;transform-origin:0 0;transform:translate(32.500px,496.0px) rotate(90deg);">Comment</span>
<span style="position:absolute;left:0.0px;top:0.0px;font:400 17px/22px 'Liberation Sans', sans-serif;color:#575757;white-space:pre;letter-spacing:-0.69px;transform-origin:0 0;transform:translate(32.500px,579.5px) rotate(90deg);">Global Actions</span>
<div style="position:absolute;left:12px;top:397.5px;width:22px;height:1px;background:#bdbdbd;"></div>
<div style="position:absolute;left:12px;top:486px;width:22px;height:1px;background:#bdbdbd;"></div>
<div style="position:absolute;left:12px;top:570.5px;width:22px;height:1px;background:#bdbdbd;"></div>
<div style="position:absolute;left:12px;top:686px;width:22px;height:1px;background:#bdbdbd;"></div>
<div style="position:absolute;left:39px;top:337px;width:1608px;height:606px;border:1px solid #a9c4ee;border-bottom:none;background:#fff;"></div>
<div style="position:absolute;left:40.5px;top:338px;width:1605.5px;height:32px;background:linear-gradient(#f6f6f6,#eaeaea);"></div>
<div style="position:absolute;left:41px;top:369.5px;width:1605px;height:1.5px;background:#2d4a78;"></div>
<span style="position:absolute;left:44.0px;top:345.5px;font:700 13px/17px 'Liberation Sans', sans-serif;color:#111;white-space:pre;letter-spacing:-0.10px;">View</span>
<div style="position:absolute;left:78px;top:343.5px;width:173px;height:20px;border:1px solid #7a7a7a;border-radius:3px;background:#fff;"></div>
<span style="position:absolute;left:83.0px;top:344.5px;font:400 14px/18px 'Liberation Sans', sans-serif;color:#111;white-space:pre;letter-spacing:0.29px;">DB Report - LK</span>
<svg style='left:237px;top:351px' width='10' height='6' viewBox='0 0 10 6'><path d='M1 1 5 5 9 1' stroke='#111' stroke-width='1.600' fill='none'/></svg>
<span style="position:absolute;left:259.0px;top:345.5px;font:400 13px/17px 'Liberation Sans', sans-serif;color:#2222cc;white-space:pre;letter-spacing:-0.11px;text-decoration:underline;">Edit View</span>
<span style="position:absolute;left:316.0px;top:345.5px;font:400 13px/17px 'Liberation Sans', sans-serif;color:#222;white-space:pre;">|</span>
<span style="position:absolute;left:323.0px;top:345.5px;font:400 13px/17px 'Liberation Sans', sans-serif;color:#2222cc;white-space:pre;letter-spacing:-0.07px;text-decoration:underline;">New View</span>
<span style="position:absolute;left:386.0px;top:345.5px;font:400 13px/17px 'Liberation Sans', sans-serif;color:#222;white-space:pre;">|</span>
<span style="position:absolute;left:393.5px;top:345.5px;font:400 13px/17px 'Liberation Sans', sans-serif;color:#2222cc;white-space:pre;letter-spacing:-0.20px;text-decoration:underline;">Set as Preferred View</span>
<div class='cb' style='left:542px;top:345px'></div>
<span style="position:absolute;left:559.5px;top:345.5px;font:400 13px/17px 'Liberation Sans', sans-serif;color:#222;white-space:pre;letter-spacing:-0.18px;">Expand Long Text</span>
<span style="position:absolute;left:782.0px;top:342.8px;font:700 13px/17px 'Liberation Sans', sans-serif;color:#111;white-space:pre;letter-spacing:-0.01px;">Workset</span>
<div style="position:absolute;left:838px;top:341px;width:432px;height:20px;border:1px solid #7a7a7a;border-radius:3px;background:#fff;"></div>
<span style="position:absolute;left:843.0px;top:342.0px;font:400 14px/18px 'Liberation Sans', sans-serif;color:#111;white-space:pre;letter-spacing:0.13px;">None</span>
<svg style='left:1256px;top:348px' width='10' height='6' viewBox='0 0 10 6'><path d='M1 1 5 5 9 1' stroke='#111' stroke-width='1.600' fill='none'/></svg>
<svg style='left:1413px;top:341px' width='18' height='18' viewBox='0 0 18 18'><circle cx='9' cy='9' r='8.500' fill='#1d8fd6'/><circle cx='9' cy='9' r='7' fill='#34a9ea'/><path d='M9 4V14M4 9H14' stroke='#fff' stroke-width='2.600'/></svg>
<span style="position:absolute;left:1435.5px;top:345.5px;font:700 13px/17px 'Liberation Sans', sans-serif;color:#111;white-space:pre;letter-spacing:-0.02px;">Filter:</span>
<span style="position:absolute;left:1474.0px;top:345.5px;font:400 13px/17px 'Liberation Sans', sans-serif;color:#222;white-space:pre;letter-spacing:0.23px;">None</span>
<div style="position:absolute;left:1525px;top:343px;width:116px;height:23px;border:1px solid #8a8a8a;border-radius:2px;background:#f3f3f3;"></div>
<span style="position:absolute;left:1532.5px;top:344.5px;font:400 14.5px/19px 'Liberation Sans', sans-serif;color:#111;white-space:pre;letter-spacing:0.02px;">Advanced Filter</span>
<div style="position:absolute;left:40.5px;top:370.5px;width:1605.5px;height:40px;background:linear-gradient(#d7e3f4,#dbe6f6);"></div>
<div style="position:absolute;left:52px;top:377px;width:23px;height:24px;border:1px solid #3f63a0;border-radius:3px;background:linear-gradient(#fff,#e9eef6);box-shadow:0 1px 1px rgba(40,70,120,.4);"></div>
<svg style='left:59px;top:384px' width='9' height='10' viewBox='0 0 9 10'><rect x='0.500' y='0.500' width='2' height='9' fill='#111'/><path d='M8.500 0.500V9.500L3 5Z' fill='#111'/></svg>
<div style="position:absolute;left:79.5px;top:377px;width:23px;height:24px;border:1px solid #3f63a0;border-radius:3px;background:linear-gradient(#fff,#e9eef6);box-shadow:0 1px 1px rgba(40,70,120,.4);"></div>
<svg style='left:87.5px;top:384px' width='7' height='10' viewBox='0 0 7 10'><path d='M6.500 0.500V9.500L0.500 5Z' fill='#111'/></svg>
<div style="position:absolute;left:316px;top:377px;width:23px;height:24px;border:1px solid #3f63a0;border-radius:3px;background:linear-gradient(#fff,#e9eef6);box-shadow:0 1px 1px rgba(40,70,120,.4);"></div>
<svg style='left:325px;top:384px' width='7' height='10' viewBox='0 0 7 10'><path d='M0.500 0.500V9.500L6.500 5Z' fill='#111'/></svg>
<div style="position:absolute;left:343.5px;top:377px;width:23px;height:24px;border:1px solid #3f63a0;border-radius:3px;background:linear-gradient(#fff,#e9eef6);box-shadow:0 1px 1px rgba(40,70,120,.4);"></div>
<svg style='left:350.5px;top:384px' width='9' height='10' viewBox='0 0 9 10'><rect x='6.500' y='0.500' width='2' height='9' fill='#111'/><path d='M0.500 0.500V9.500L6 5Z' fill='#111'/></svg>
<div style="position:absolute;left:106.5px;top:377px;width:18px;height:24px;border:1.500px solid #f0913f;border-radius:3px;background:#fff;"></div>
<span style="position:absolute;left:111.6px;top:380.0px;font:400 14px/18px 'Liberation Sans', sans-serif;color:#485166;white-space:pre;">1</span>
<span style="position:absolute;left:129.1px;top:380.0px;font:400 14px/18px 'Liberation Sans', sans-serif;color:#485166;white-space:pre;">2</span>
<span style="position:absolute;left:147.1px;top:380.0px;font:400 14px/18px 'Liberation Sans', sans-serif;color:#485166;white-space:pre;">3</span>
<span style="position:absolute;left:165.1px;top:380.0px;font:400 14px/18px 'Liberation Sans', sans-serif;color:#485166;white-space:pre;">4</span>
<span style="position:absolute;left:183.1px;top:380.0px;font:400 14px/18px 'Liberation Sans', sans-serif;color:#485166;white-space:pre;">5</span>
<span style="position:absolute;left:201.1px;top:380.0px;font:400 14px/18px 'Liberation Sans', sans-serif;color:#485166;white-space:pre;">6</span>
<span style="position:absolute;left:219.1px;top:380.0px;font:400 14px/18px 'Liberation Sans', sans-serif;color:#485166;white-space:pre;">7</span>
<span style="position:absolute;left:237.1px;top:380.0px;font:400 14px/18px 'Liberation Sans', sans-serif;color:#485166;white-space:pre;">8</span>
<span style="position:absolute;left:255.1px;top:380.0px;font:400 14px/18px 'Liberation Sans', sans-serif;color:#485166;white-space:pre;">9</span>
<span style="position:absolute;left:273.2px;top:380.0px;font:400 14px/18px 'Liberation Sans', sans-serif;color:#485166;white-space:pre;">10</span>
<span style="position:absolute;left:297.1px;top:381.5px;font:400 13px/17px 'Liberation Sans', sans-serif;color:#485166;white-space:pre;">...</span>
<span style="position:absolute;left:636.0px;top:380.5px;font:400 13px/17px 'Liberation Sans', sans-serif;color:#485166;white-space:pre;letter-spacing:-0.40px;">Page:</span>
<div style="position:absolute;left:673px;top:378.5px;width:52px;height:22px;background:#fff;"></div>
<span style="position:absolute;left:694.9px;top:381.5px;font:400 13px/17px 'Liberation Sans', sans-serif;color:#485166;white-space:pre;">1</span>
<span style="position:absolute;left:730.0px;top:380.5px;font:400 13px/17px 'Liberation Sans', sans-serif;color:#485166;white-space:pre;letter-spacing:-0.05px;">of 1833</span>
<div style="position:absolute;left:782px;top:377px;width:27px;height:24px;border:1px solid #555;border-radius:2px;background:#f4f4f4;"></div>
<span style="position:absolute;left:786.8px;top:380.5px;font:400 13px/17px 'Liberation Sans', sans-serif;color:#111;white-space:pre;">Go</span>
<span style="position:absolute;left:824.0px;top:380.5px;font:400 13px/17px 'Liberation Sans', sans-serif;color:#485166;white-space:pre;letter-spacing:-0.47px;">Page size:</span>
<div style="position:absolute;left:886px;top:378.5px;width:62px;height:22px;background:#fff;"></div>
<span style="position:absolute;left:909.8px;top:381.5px;font:400 13px/17px 'Liberation Sans', sans-serif;color:#485166;white-space:pre;">35</span>
<div style="position:absolute;left:955px;top:377px;width:54px;height:24px;border:1px solid #555;border-radius:2px;background:#f4f4f4;"></div>
<span style="position:absolute;left:960.0px;top:380.5px;font:400 13px/17px 'Liberation Sans', sans-serif;color:#111;white-space:pre;letter-spacing:-0.26px;">Change</span>
<span style="position:absolute;left:1301.0px;top:380.5px;font:400 13px/17px 'Liberation Sans', sans-serif;color:#485166;white-space:pre;letter-spacing:-0.04px;">Displaying 1 to 35 of 64148 records (Unique items: 32074)</span>
<div style="position:absolute;left:40.5px;top:406.5px;width:1605.5px;height:29px;background:linear-gradient(#dbe6f6 0,#c6d6f0 10%,#a3bbe8 26%,#7fa0dd 48%,#799cda 100%);"></div>
<div style="position:absolute;left:1629px;top:435px;width:17px;height:36.5px;background:#7a9ddb;"></div>
<div class='cb' style='left:52px;top:415px;border-color:#e8eefa;width:14px;height:14px;'></div>
<span style="position:absolute;left:88.0px;top:413.0px;font:400 13px/17px 'Liberation Sans', sans-serif;color:#15233d;white-space:pre;letter-spacing:0.17px;">Options</span>
<span style="position:absolute;left:160.5px;top:413.0px;font:400 13px/17px 'Liberation Sans', sans-serif;color:#15233d;white-space:pre;letter-spacing:-0.08px;">Cust_ItemNo</span>
<span style="position:absolute;left:323.5px;top:413.0px;font:400 13px/17px 'Liberation Sans', sans-serif;color:#15233d;white-space:pre;letter-spacing:-0.23px;">Prod_Descrip</span>
<span style="position:absolute;left:494.0px;top:413.0px;font:400 13px/17px 'Liberation Sans', sans-serif;color:#15233d;white-space:pre;letter-spacing:-0.09px;">Alt_PartNo</span>
<span style="position:absolute;left:601.0px;top:413.0px;font:400 13px/17px 'Liberation Sans', sans-serif;color:#15233d;white-space:pre;letter-spacing:-0.81px;">UPC_Codes</span>
<span style="position:absolute;left:711.0px;top:413.0px;font:400 13px/17px 'Liberation Sans', sans-serif;color:#15233d;white-space:pre;letter-spacing:-0.32px;">Proj_RefNo</span>
<span style="position:absolute;left:829.0px;top:413.0px;font:400 13px/17px 'Liberation Sans', sans-serif;color:#15233d;white-space:pre;letter-spacing:-0.46px;">HTS Code</span>
<span style="position:absolute;left:955.5px;top:413.0px;font:400 13px/17px 'Liberation Sans', sans-serif;color:#15233d;white-space:pre;letter-spacing:-0.16px;">Ruling1</span>
<span style="position:absolute;left:1075.5px;top:413.0px;font:400 13px/17px 'Liberation Sans', sans-serif;color:#15233d;white-space:pre;letter-spacing:-0.16px;">Ruling2</span>
<span style="position:absolute;left:1174.0px;top:413.0px;font:400 13px/17px 'Liberation Sans', sans-serif;color:#15233d;white-space:pre;letter-spacing:-0.55px;">Specs_OnFile</span>
<span style="position:absolute;left:1275.0px;top:413.0px;font:400 13px/17px 'Liberation Sans', sans-serif;color:#15233d;white-space:pre;letter-spacing:-0.28px;">WCO_Audited</span>
<span style="position:absolute;left:1378.0px;top:413.0px;font:400 13px/17px 'Liberation Sans', sans-serif;color:#15233d;white-space:pre;letter-spacing:-0.17px;">WCO_DateAudited</span>
<span style="position:absolute;left:1516.0px;top:413.0px;font:400 13px/17px 'Liberation Sans', sans-serif;color:#15233d;white-space:pre;letter-spacing:0.01px;">Workflow Level</span>
<div style="position:absolute;left:40.5px;top:435.5px;width:1588.5px;height:35.5px;background:linear-gradient(#c9daf2 0,#d6e3f4 6%,#d5e2f3 100%);"></div>
<div style="position:absolute;left:41px;top:470.5px;width:1605px;height:1.2px;background:#7ea6e2;"></div>
<div style="position:absolute;left:78.5px;top:436px;width:1px;height:35px;background:#b9cdee;"></div>
<div style="position:absolute;left:79.5px;top:436px;width:1px;height:35px;background:#e3ecf8;"></div>
<div style="position:absolute;left:144px;top:436px;width:1px;height:35px;background:#b9cdee;"></div>
<div style="position:absolute;left:145px;top:436px;width:1px;height:35px;background:#e3ecf8;"></div>
<div style="position:absolute;left:253px;top:436px;width:1px;height:35px;background:#b9cdee;"></div>
<div style="position:absolute;left:254px;top:436px;width:1px;height:35px;background:#e3ecf8;"></div>
<div style="position:absolute;left:471px;top:436px;width:1px;height:35px;background:#b9cdee;"></div>
<div style="position:absolute;left:472px;top:436px;width:1px;height:35px;background:#e3ecf8;"></div>
<div style="position:absolute;left:580px;top:436px;width:1px;height:35px;background:#b9cdee;"></div>
<div style="position:absolute;left:581px;top:436px;width:1px;height:35px;background:#e3ecf8;"></div>
<div style="position:absolute;left:689px;top:436px;width:1px;height:35px;background:#b9cdee;"></div>
<div style="position:absolute;left:690px;top:436px;width:1px;height:35px;background:#e3ecf8;"></div>
<div style="position:absolute;left:798px;top:436px;width:1px;height:35px;background:#b9cdee;"></div>
<div style="position:absolute;left:799px;top:436px;width:1px;height:35px;background:#e3ecf8;"></div>
<div style="position:absolute;left:917px;top:436px;width:1px;height:35px;background:#b9cdee;"></div>
<div style="position:absolute;left:918px;top:436px;width:1px;height:35px;background:#e3ecf8;"></div>
<div style="position:absolute;left:1037px;top:436px;width:1px;height:35px;background:#b9cdee;"></div>
<div style="position:absolute;left:1038px;top:436px;width:1px;height:35px;background:#e3ecf8;"></div>
<div style="position:absolute;left:1157px;top:436px;width:1px;height:35px;background:#b9cdee;"></div>
<div style="position:absolute;left:1158px;top:436px;width:1px;height:35px;background:#e3ecf8;"></div>
<div style="position:absolute;left:1266px;top:436px;width:1px;height:35px;background:#b9cdee;"></div>
<div style="position:absolute;left:1267px;top:436px;width:1px;height:35px;background:#e3ecf8;"></div>
<div style="position:absolute;left:1365px;top:436px;width:1px;height:35px;background:#b9cdee;"></div>
<div style="position:absolute;left:1366px;top:436px;width:1px;height:35px;background:#e3ecf8;"></div>
<div style="position:absolute;left:1500px;top:436px;width:1px;height:35px;background:#b9cdee;"></div>
<div style="position:absolute;left:1501px;top:436px;width:1px;height:35px;background:#e3ecf8;"></div>
<div style="position:absolute;left:1621px;top:436px;width:1px;height:35px;background:#b9cdee;"></div>
<div style="position:absolute;left:1622px;top:436px;width:1px;height:35px;background:#e3ecf8;"></div>
<svg style='left:0;top:0' width='0' height='0'><defs><linearGradient id='fg' x1='0' y1='0' x2='0' y2='1'><stop offset='0' stop-color='#b4bcc8'/><stop offset='.45' stop-color='#6f7987'/><stop offset='1' stop-color='#3d4652'/></linearGradient></defs></svg>
<div class='fi' style='left:153px;top:441px;width:65.5px'></div>
<div class='fb' style='left:223.3px;top:439.500px'><svg style='left:4.800px;top:6px' width='12' height='11' viewBox='0 0 11 10'><path d='M0.300 0.500H10.700L6.600 5.200V9.300L4.400 8.300V5.200Z' fill='url(#fg)'/></svg></div>
<div class='fi' style='left:262px;top:441px;width:176.5px'></div>
<div class='fb' style='left:441.3px;top:439.500px'><svg style='left:4.800px;top:6px' width='12' height='11' viewBox='0 0 11 10'><path d='M0.300 0.500H10.700L6.600 5.200V9.300L4.400 8.300V5.200Z' fill='url(#fg)'/></svg></div>
<div class='fi' style='left:480px;top:441px;width:67.5px'></div>
<div class='fb' style='left:550.8px;top:439.500px'><svg style='left:4.800px;top:6px' width='12' height='11' viewBox='0 0 11 10'><path d='M0.300 0.500H10.700L6.600 5.200V9.300L4.400 8.300V5.200Z' fill='url(#fg)'/></svg></div>
<div class='fi' style='left:589px;top:441px;width:67.5px'></div>
<div class='fb' style='left:659.8px;top:439.500px'><svg style='left:4.800px;top:6px' width='12' height='11' viewBox='0 0 11 10'><path d='M0.300 0.500H10.700L6.600 5.200V9.300L4.400 8.300V5.200Z' fill='url(#fg)'/></svg></div>
<div class='fi' style='left:698px;top:441px;width:67.5px'></div>
<div class='fb' style='left:768.8px;top:439.500px'><svg style='left:4.800px;top:6px' width='12' height='11' viewBox='0 0 11 10'><path d='M0.300 0.500H10.700L6.600 5.200V9.300L4.400 8.300V5.200Z' fill='url(#fg)'/></svg></div>
<div class='fi' style='left:806px;top:441px;width:78.5px'></div>
<div class='fb' style='left:888.3px;top:439.500px'><svg style='left:4.800px;top:6px' width='12' height='11' viewBox='0 0 11 10'><path d='M0.300 0.500H10.700L6.600 5.200V9.300L4.400 8.300V5.200Z' fill='url(#fg)'/></svg></div>
<div class='fi' style='left:926px;top:441px;width:78.5px'></div>
<div class='fb' style='left:1008.3px;top:439.500px'><svg style='left:4.800px;top:6px' width='12' height='11' viewBox='0 0 11 10'><path d='M0.300 0.500H10.700L6.600 5.200V9.300L4.400 8.300V5.200Z' fill='url(#fg)'/></svg></div>
<div class='fi' style='left:1046px;top:441px;width:78.5px'></div>
<div class='fb' style='left:1128.3px;top:439.500px'><svg style='left:4.800px;top:6px' width='12' height='11' viewBox='0 0 11 10'><path d='M0.300 0.500H10.700L6.600 5.200V9.300L4.400 8.300V5.200Z' fill='url(#fg)'/></svg></div>
<div class='fi' style='left:1166px;top:441px;width:68.5px'></div>
<div class='fb' style='left:1237.3px;top:439.500px'><svg style='left:4.800px;top:6px' width='12' height='11' viewBox='0 0 11 10'><path d='M0.300 0.500H10.700L6.600 5.200V9.300L4.400 8.300V5.200Z' fill='url(#fg)'/></svg></div>
<div class='fi' style='left:1275px;top:441px;width:38.5px'></div>
<div class='fb' style='left:1319.3px;top:439.500px'><svg style='left:4.800px;top:6px' width='12' height='11' viewBox='0 0 11 10'><path d='M0.300 0.500H10.700L6.600 5.200V9.300L4.400 8.300V5.200Z' fill='url(#fg)'/></svg></div>
<div class='fi' style='left:1374px;top:441px;width:93.5px'></div>
<div class='fb' style='left:1471.3px;top:439.500px'><svg style='left:4.800px;top:6px' width='12' height='11' viewBox='0 0 11 10'><path d='M0.300 0.500H10.700L6.600 5.200V9.300L4.400 8.300V5.200Z' fill='url(#fg)'/></svg></div>
<div style="position:absolute;left:1509.5px;top:440px;width:80px;height:23px;border:2px solid #111;border-radius:4px;background:#fff;"></div>
<div class='fb' style='left:1591.500px;top:439.500px'><svg style='left:4.800px;top:6px' width='12' height='11' viewBox='0 0 11 10'><path d='M0.300 0.500H10.700L6.600 5.200V9.300L4.400 8.300V5.200Z' fill='url(#fg)'/></svg></div>
<div style="position:absolute;left:78.5px;top:471.5px;width:1px;height:469px;background:#d9dfee;"></div>
<div style="position:absolute;left:144px;top:471.5px;width:1px;height:469px;background:#d9dfee;"></div>
<div style="position:absolute;left:253px;top:471.5px;width:1px;height:469px;background:#d9dfee;"></div>
<div style="position:absolute;left:471px;top:471.5px;width:1px;height:469px;background:#d9dfee;"></div>
<div style="position:absolute;left:580px;top:471.5px;width:1px;height:469px;background:#d9dfee;"></div>
<div style="position:absolute;left:689px;top:471.5px;width:1px;height:469px;background:#d9dfee;"></div>
<div style="position:absolute;left:798px;top:471.5px;width:1px;height:469px;background:#d9dfee;"></div>
<div style="position:absolute;left:917px;top:471.5px;width:1px;height:469px;background:#d9dfee;"></div>
<div style="position:absolute;left:1037px;top:471.5px;width:1px;height:469px;background:#d9dfee;"></div>
<div style="position:absolute;left:1157px;top:471.5px;width:1px;height:469px;background:#d9dfee;"></div>
<div style="position:absolute;left:1266px;top:471.5px;width:1px;height:469px;background:#d9dfee;"></div>
<div style="position:absolute;left:1365px;top:471.5px;width:1px;height:469px;background:#d9dfee;"></div>
<div style="position:absolute;left:1500px;top:471.5px;width:1px;height:469px;background:#d9dfee;"></div>
<div style="position:absolute;left:1621px;top:471.5px;width:1px;height:469px;background:#d9dfee;"></div>
<div style="position:absolute;left:41px;top:499.8px;width:1589px;height:1px;background:#d9dde8;"></div>
<div class='cb' style='left:52.500px;top:479.2px'></div>
<div style='position:absolute;left:87px;top:476.9px;width:18px;height:16px'><svg width='18' height='16' viewBox='0 0 18 16'><rect x='0.800' y='2.300' width='12.400' height='12.700' fill='#f1f6fc' stroke='#5578bd' stroke-width='1.400'/><path d='M3 13.300 4.300 9.200 12.600 1.300 15.700 4.200 7.300 12.200Z' fill='#55b043' stroke='#2f7f28' stroke-width='0.800'/><path d='M12.600 1.300 14.200 -0.100 17.300 2.700 15.700 4.200Z' fill='#d43838'/><path d='M3 13.300 4.300 9.200 7.300 12.200Z' fill='#f0d8a8'/><path d='M3 13.300 3.500 11.800 4.600 12.800Z' fill='#333'/></svg></div>
<div style='position:absolute;left:109px;top:477.7px;width:8px;height:15px'><svg width='8' height='15' viewBox='0 0 8 15' style='opacity:1'><rect x='0.800' y='0.800' width='6.400' height='13.400' rx='3.200' fill='#cfd2d7' stroke='#84888f' stroke-width='1.100'/><rect x='3.200' y='3.500' width='1.600' height='8' rx='0.800' fill='#8f939a'/></svg></div>
<div style='position:absolute;left:121px;top:477.7px;width:14px;height:13px'><svg width='14' height='13' viewBox='0 0 14 13' style='opacity:1'><path d='M7 0.700C10.500 0.700 13.200 2.600 13.200 5.200 13.200 7.700 10.800 9.500 7.800 9.700L9.200 12.300 5.300 9.600C2.600 9.100 0.800 7.300 0.800 5.200 0.800 2.600 3.500 0.700 7 0.700Z' fill='#f1f2f4' stroke='#7d8087' stroke-width='1.100'/><path d='M4 4.200H10M4 6.200H9' stroke='#8a8d94' stroke-width='0.900'/></svg></div>
<span style="position:absolute;left:152.0px;top:478.2px;font:400 13px/17px 'Liberation Sans', sans-serif;color:#454a55;white-space:pre;letter-spacing:-0.23px;">273801</span>
<span style="position:absolute;left:261.0px;top:478.2px;font:400 13px/17px 'Liberation Sans', sans-serif;color:#454a55;white-space:pre;letter-spacing:-0.63px;">SPRING WASHER 1900 D</span>
<span style="position:absolute;left:588.0px;top:478.2px;font:400 13px/17px 'Liberation Sans', sans-serif;color:#454a55;white-space:pre;letter-spacing:-0.18px;">500066820</span>
<span style="position:absolute;left:697.0px;top:478.2px;font:400 13px/17px 'Liberation Sans', sans-serif;color:#454a55;white-space:pre;letter-spacing:0.04px;">p-00001</span>
<div style="position:absolute;left:41px;top:577.8px;width:1589px;height:1px;background:#d9dde8;"></div>
<div class='cb' style='left:52.500px;top:533.1px'></div>
<div style='position:absolute;left:87px;top:530.8px;width:18px;height:16px'><svg width='18' height='16' viewBox='0 0 18 16'><rect x='0.800' y='2.300' width='12.400' height='12.700' fill='#f1f6fc' stroke='#5578bd' stroke-width='1.400'/><path d='M3 13.300 4.300 9.200 12.600 1.300 15.700 4.200 7.300 12.200Z' fill='#55b043' stroke='#2f7f28' stroke-width='0.800'/><path d='M12.600 1.300 14.200 -0.100 17.300 2.700 15.700 4.200Z' fill='#d43838'/><path d='M3 13.300 4.300 9.200 7.300 12.200Z' fill='#f0d8a8'/><path d='M3 13.300 3.500 11.800 4.600 12.800Z' fill='#333'/></svg></div>
<div style='position:absolute;left:109px;top:531.6px;width:8px;height:15px'><svg width='8' height='15' viewBox='0 0 8 15' style='opacity:1'><rect x='0.800' y='0.800' width='6.400' height='13.400' rx='3.200' fill='#cfd2d7' stroke='#84888f' stroke-width='1.100'/><rect x='3.200' y='3.500' width='1.600' height='8' rx='0.800' fill='#8f939a'/></svg></div>
<div style='position:absolute;left:121px;top:531.6px;width:14px;height:13px'><svg width='14' height='13' viewBox='0 0 14 13' style='opacity:1'><path d='M7 0.700C10.500 0.700 13.200 2.600 13.200 5.200 13.200 7.700 10.800 9.500 7.800 9.700L9.200 12.300 5.300 9.600C2.600 9.100 0.800 7.300 0.800 5.200 0.800 2.600 3.500 0.700 7 0.700Z' fill='#f1f2f4' stroke='#7d8087' stroke-width='1.100'/><path d='M4 4.200H10M4 6.200H9' stroke='#8a8d94' stroke-width='0.900'/></svg></div>
<span style="position:absolute;left:152.0px;top:532.1px;font:400 13px/17px 'Liberation Sans', sans-serif;color:#454a55;white-space:pre;letter-spacing:-0.23px;">273801</span>
<span style="position:absolute;left:261.0px;top:532.1px;font:400 13px/17px 'Liberation Sans', sans-serif;color:#454a55;white-space:pre;letter-spacing:-0.63px;">SPRING WASHER 1900 D</span>
<span style="position:absolute;left:588.0px;top:532.1px;font:400 13px/17px 'Liberation Sans', sans-serif;color:#454a55;white-space:pre;letter-spacing:-0.18px;">500066820</span>
<span style="position:absolute;left:697.0px;top:532.1px;font:400 13px/17px 'Liberation Sans', sans-serif;color:#454a55;white-space:pre;letter-spacing:0.04px;">p-00001</span>
<span style="position:absolute;left:806.0px;top:532.1px;font:400 13px/17px 'Liberation Sans', sans-serif;color:#454a55;white-space:pre;letter-spacing:-0.23px;">731822</span>
<span style="position:absolute;left:1166.0px;top:532.1px;font:400 13px/17px 'Liberation Sans', sans-serif;color:#454a55;white-space:pre;letter-spacing:-1.20px;">Y</span>
<span style="position:absolute;left:1509.0px;top:532.1px;font:400 13px/17px 'Liberation Sans', sans-serif;color:#454a55;white-space:pre;letter-spacing:-0.03px;">Final Approval</span>
<div style="position:absolute;left:41px;top:607.8px;width:1589px;height:1px;background:#d9dde8;"></div>
<div class='cb' style='left:52.500px;top:587.1px'></div>
<div style='position:absolute;left:87px;top:584.8px;width:18px;height:16px'><svg width='18' height='16' viewBox='0 0 18 16'><rect x='0.800' y='2.300' width='12.400' height='12.700' fill='#f1f6fc' stroke='#5578bd' stroke-width='1.400'/><path d='M3 13.300 4.300 9.200 12.600 1.300 15.700 4.200 7.300 12.200Z' fill='#55b043' stroke='#2f7f28' stroke-width='0.800'/><path d='M12.600 1.300 14.200 -0.100 17.300 2.700 15.700 4.200Z' fill='#d43838'/><path d='M3 13.300 4.300 9.200 7.300 12.200Z' fill='#f0d8a8'/><path d='M3 13.300 3.500 11.800 4.600 12.800Z' fill='#333'/></svg></div>
<div style='position:absolute;left:109px;top:585.6px;width:8px;height:15px'><svg width='8' height='15' viewBox='0 0 8 15' style='opacity:0.28'><rect x='0.800' y='0.800' width='6.400' height='13.400' rx='3.200' fill='#cfd2d7' stroke='#84888f' stroke-width='1.100'/><rect x='3.200' y='3.500' width='1.600' height='8' rx='0.800' fill='#8f939a'/></svg></div>
<div style='position:absolute;left:121px;top:585.6px;width:14px;height:13px'><svg width='14' height='13' viewBox='0 0 14 13' style='opacity:1'><path d='M7 0.700C10.500 0.700 13.200 2.600 13.200 5.200 13.200 7.700 10.800 9.500 7.800 9.700L9.200 12.300 5.300 9.600C2.600 9.100 0.800 7.300 0.800 5.200 0.800 2.600 3.500 0.700 7 0.700Z' fill='#f1f2f4' stroke='#7d8087' stroke-width='1.100'/><path d='M4 4.200H10M4 6.200H9' stroke='#8a8d94' stroke-width='0.900'/></svg></div>
<span style="position:absolute;left:152.0px;top:586.1px;font:400 13px/17px 'Liberation Sans', sans-serif;color:#454a55;white-space:pre;letter-spacing:-0.38px;">141B8881P0013</span>
<span style="position:absolute;left:261.0px;top:586.1px;font:400 13px/17px 'Liberation Sans', sans-serif;color:#454a55;white-space:pre;letter-spacing:-0.69px;">WRENCH - HAND; SLUG; STEEL</span>
<span style="position:absolute;left:479.0px;top:586.1px;font:400 13px/17px 'Liberation Sans', sans-serif;color:#454a55;white-space:pre;letter-spacing:-0.18px;">500015449</span>
<span style="position:absolute;left:588.0px;top:586.1px;font:400 13px/17px 'Liberation Sans', sans-serif;color:#454a55;white-space:pre;letter-spacing:-0.18px;">600001321</span>
<span style="position:absolute;left:697.0px;top:586.1px;font:400 13px/17px 'Liberation Sans', sans-serif;color:#454a55;white-space:pre;letter-spacing:0.04px;">p-00001</span>
<span style="position:absolute;left:1509.0px;top:586.1px;font:400 13px/17px 'Liberation Sans', sans-serif;color:#454a55;white-space:pre;letter-spacing:-0.42px;">Level 1</span>
<div style="position:absolute;left:41px;top:686px;width:1589px;height:1px;background:#d9dde8;"></div>
<div class='cb' style='left:52.500px;top:641.2px'></div>
<div style='position:absolute;left:87px;top:638.9px;width:18px;height:16px'><svg width='18' height='16' viewBox='0 0 18 16'><rect x='0.800' y='2.300' width='12.400' height='12.700' fill='#f1f6fc' stroke='#5578bd' stroke-width='1.400'/><path d='M3 13.300 4.300 9.200 12.600 1.300 15.700 4.200 7.300 12.200Z' fill='#55b043' stroke='#2f7f28' stroke-width='0.800'/><path d='M12.600 1.300 14.200 -0.100 17.300 2.700 15.700 4.200Z' fill='#d43838'/><path d='M3 13.300 4.300 9.200 7.300 12.200Z' fill='#f0d8a8'/><path d='M3 13.300 3.500 11.800 4.600 12.800Z' fill='#333'/></svg></div>
<div style='position:absolute;left:109px;top:639.7px;width:8px;height:15px'><svg width='8' height='15' viewBox='0 0 8 15' style='opacity:0.28'><rect x='0.800' y='0.800' width='6.400' height='13.400' rx='3.200' fill='#cfd2d7' stroke='#84888f' stroke-width='1.100'/><rect x='3.200' y='3.500' width='1.600' height='8' rx='0.800' fill='#8f939a'/></svg></div>
<div style='position:absolute;left:121px;top:639.7px;width:14px;height:13px'><svg width='14' height='13' viewBox='0 0 14 13' style='opacity:1'><path d='M7 0.700C10.500 0.700 13.200 2.600 13.200 5.200 13.200 7.700 10.800 9.500 7.800 9.700L9.200 12.300 5.300 9.600C2.600 9.100 0.800 7.300 0.800 5.200 0.800 2.600 3.500 0.700 7 0.700Z' fill='#f1f2f4' stroke='#7d8087' stroke-width='1.100'/><path d='M4 4.200H10M4 6.200H9' stroke='#8a8d94' stroke-width='0.900'/></svg></div>
<span style="position:absolute;left:152.0px;top:640.2px;font:400 13px/17px 'Liberation Sans', sans-serif;color:#454a55;white-space:pre;letter-spacing:-0.38px;">141B8881P0013</span>
<span style="position:absolute;left:261.0px;top:640.2px;font:400 13px/17px 'Liberation Sans', sans-serif;color:#454a55;white-space:pre;letter-spacing:-0.69px;">WRENCH - HAND; SLUG; STEEL</span>
<span style="position:absolute;left:479.0px;top:640.2px;font:400 13px/17px 'Liberation Sans', sans-serif;color:#454a55;white-space:pre;letter-spacing:-0.18px;">500015449</span>
<span style="position:absolute;left:588.0px;top:640.2px;font:400 13px/17px 'Liberation Sans', sans-serif;color:#454a55;white-space:pre;letter-spacing:-0.18px;">600001321</span>
<span style="position:absolute;left:697.0px;top:640.2px;font:400 13px/17px 'Liberation Sans', sans-serif;color:#454a55;white-space:pre;letter-spacing:0.04px;">p-00001</span>
<span style="position:absolute;left:806.0px;top:640.2px;font:400 13px/17px 'Liberation Sans', sans-serif;color:#454a55;white-space:pre;letter-spacing:-0.15px;">8204.11</span>
<span style="position:absolute;left:926.0px;top:640.2px;font:400 13px/17px 'Liberation Sans', sans-serif;color:#454a55;white-space:pre;letter-spacing:-0.33px;">NY R00217</span>
<span style="position:absolute;left:1046.0px;top:640.2px;font:400 13px/17px 'Liberation Sans', sans-serif;color:#454a55;white-space:pre;letter-spacing:-0.25px;">NY K89376</span>
<span style="position:absolute;left:1166.0px;top:640.2px;font:400 13px/17px 'Liberation Sans', sans-serif;color:#454a55;white-space:pre;letter-spacing:-1.20px;">Y</span>
<span style="position:absolute;left:1509.0px;top:640.2px;font:400 13px/17px 'Liberation Sans', sans-serif;color:#454a55;white-space:pre;letter-spacing:-0.03px;">Final Approval</span>
<div style="position:absolute;left:41px;top:715px;width:1589px;height:1px;background:#d9dde8;"></div>
<div class='cb' style='left:52.500px;top:694.8px'></div>
<div style='position:absolute;left:87px;top:692.5px;width:18px;height:16px'><svg width='18' height='16' viewBox='0 0 18 16'><rect x='0.800' y='2.300' width='12.400' height='12.700' fill='#f1f6fc' stroke='#5578bd' stroke-width='1.400'/><path d='M3 13.300 4.300 9.200 12.600 1.300 15.700 4.200 7.300 12.200Z' fill='#55b043' stroke='#2f7f28' stroke-width='0.800'/><path d='M12.600 1.300 14.200 -0.100 17.300 2.700 15.700 4.200Z' fill='#d43838'/><path d='M3 13.300 4.300 9.200 7.300 12.200Z' fill='#f0d8a8'/><path d='M3 13.300 3.500 11.800 4.600 12.800Z' fill='#333'/></svg></div>
<div style='position:absolute;left:109px;top:693.3px;width:8px;height:15px'><svg width='8' height='15' viewBox='0 0 8 15' style='opacity:0.28'><rect x='0.800' y='0.800' width='6.400' height='13.400' rx='3.200' fill='#cfd2d7' stroke='#84888f' stroke-width='1.100'/><rect x='3.200' y='3.500' width='1.600' height='8' rx='0.800' fill='#8f939a'/></svg></div>
<div style='position:absolute;left:121px;top:693.3px;width:14px;height:13px'><svg width='14' height='13' viewBox='0 0 14 13' style='opacity:1'><path d='M7 0.700C10.500 0.700 13.200 2.600 13.200 5.200 13.200 7.700 10.800 9.500 7.800 9.700L9.200 12.300 5.300 9.600C2.600 9.100 0.800 7.300 0.800 5.200 0.800 2.600 3.500 0.700 7 0.700Z' fill='#f1f2f4' stroke='#7d8087' stroke-width='1.100'/><path d='M4 4.200H10M4 6.200H9' stroke='#8a8d94' stroke-width='0.900'/></svg></div>
<span style="position:absolute;left:152.0px;top:693.8px;font:400 13px/17px 'Liberation Sans', sans-serif;color:#454a55;white-space:pre;letter-spacing:-0.38px;">141B8881P0014</span>
<span style="position:absolute;left:261.0px;top:693.8px;font:400 13px/17px 'Liberation Sans', sans-serif;color:#454a55;white-space:pre;letter-spacing:-0.46px;">SPANNER WRENCH (7.00 NOM)</span>
<span style="position:absolute;left:479.0px;top:693.8px;font:400 13px/17px 'Liberation Sans', sans-serif;color:#454a55;white-space:pre;letter-spacing:-0.18px;">500015450</span>
<span style="position:absolute;left:588.0px;top:693.8px;font:400 13px/17px 'Liberation Sans', sans-serif;color:#454a55;white-space:pre;letter-spacing:-0.18px;">600001322</span>
<span style="position:absolute;left:697.0px;top:693.8px;font:400 13px/17px 'Liberation Sans', sans-serif;color:#454a55;white-space:pre;letter-spacing:0.04px;">p-00001</span>
<span style="position:absolute;left:1509.0px;top:693.8px;font:400 13px/17px 'Liberation Sans', sans-serif;color:#454a55;white-space:pre;letter-spacing:-0.42px;">Level 1</span>
<div style="position:absolute;left:41px;top:793.7px;width:1589px;height:1px;background:#d9dde8;"></div>
<div class='cb' style='left:52.500px;top:748.6px'></div>
<div style='position:absolute;left:87px;top:746.4px;width:18px;height:16px'><svg width='18' height='16' viewBox='0 0 18 16'><rect x='0.800' y='2.300' width='12.400' height='12.700' fill='#f1f6fc' stroke='#5578bd' stroke-width='1.400'/><path d='M3 13.300 4.300 9.200 12.600 1.300 15.700 4.200 7.300 12.200Z' fill='#55b043' stroke='#2f7f28' stroke-width='0.800'/><path d='M12.600 1.300 14.200 -0.100 17.300 2.700 15.700 4.200Z' fill='#d43838'/><path d='M3 13.300 4.300 9.200 7.300 12.200Z' fill='#f0d8a8'/><path d='M3 13.300 3.500 11.800 4.600 12.800Z' fill='#333'/></svg></div>
<div style='position:absolute;left:109px;top:747.1px;width:8px;height:15px'><svg width='8' height='15' viewBox='0 0 8 15' style='opacity:0.28'><rect x='0.800' y='0.800' width='6.400' height='13.400' rx='3.200' fill='#cfd2d7' stroke='#84888f' stroke-width='1.100'/><rect x='3.200' y='3.500' width='1.600' height='8' rx='0.800' fill='#8f939a'/></svg></div>
<div style='position:absolute;left:121px;top:747.1px;width:14px;height:13px'><svg width='14' height='13' viewBox='0 0 14 13' style='opacity:1'><path d='M7 0.700C10.500 0.700 13.200 2.600 13.200 5.200 13.200 7.700 10.800 9.500 7.800 9.700L9.200 12.300 5.300 9.600C2.600 9.100 0.800 7.300 0.800 5.200 0.800 2.600 3.500 0.700 7 0.700Z' fill='#f1f2f4' stroke='#7d8087' stroke-width='1.100'/><path d='M4 4.200H10M4 6.200H9' stroke='#8a8d94' stroke-width='0.900'/></svg></div>
<span style="position:absolute;left:152.0px;top:747.6px;font:400 13px/17px 'Liberation Sans', sans-serif;color:#454a55;white-space:pre;letter-spacing:-0.38px;">141B8881P0014</span>
<span style="position:absolute;left:261.0px;top:747.6px;font:400 13px/17px 'Liberation Sans', sans-serif;color:#454a55;white-space:pre;letter-spacing:-0.46px;">SPANNER WRENCH (7.00 NOM)</span>
<span style="position:absolute;left:479.0px;top:747.6px;font:400 13px/17px 'Liberation Sans', sans-serif;color:#454a55;white-space:pre;letter-spacing:-0.18px;">500015450</span>
<span style="position:absolute;left:588.0px;top:747.6px;font:400 13px/17px 'Liberation Sans', sans-serif;color:#454a55;white-space:pre;letter-spacing:-0.18px;">600001322</span>
<span style="position:absolute;left:697.0px;top:747.6px;font:400 13px/17px 'Liberation Sans', sans-serif;color:#454a55;white-space:pre;letter-spacing:0.04px;">p-00001</span>
<span style="position:absolute;left:806.0px;top:747.6px;font:400 13px/17px 'Liberation Sans', sans-serif;color:#454a55;white-space:pre;letter-spacing:-0.15px;">8204.11</span>
<span style="position:absolute;left:926.0px;top:747.6px;font:400 13px/17px 'Liberation Sans', sans-serif;color:#454a55;white-space:pre;letter-spacing:-0.33px;">NY R00217</span>
<span style="position:absolute;left:1046.0px;top:747.6px;font:400 13px/17px 'Liberation Sans', sans-serif;color:#454a55;white-space:pre;letter-spacing:-0.25px;">NY K89376</span>
<span style="position:absolute;left:1166.0px;top:747.6px;font:400 13px/17px 'Liberation Sans', sans-serif;color:#454a55;white-space:pre;letter-spacing:-1.20px;">Y</span>
<span style="position:absolute;left:1509.0px;top:747.6px;font:400 13px/17px 'Liberation Sans', sans-serif;color:#454a55;white-space:pre;letter-spacing:-0.03px;">Final Approval</span>
<div style="position:absolute;left:41px;top:837px;width:1589px;height:1px;background:#d9dde8;"></div>
<div class='cb' style='left:52.500px;top:809.6px'></div>
<div style='position:absolute;left:87px;top:807.4px;width:18px;height:16px'><svg width='18' height='16' viewBox='0 0 18 16'><rect x='0.800' y='2.300' width='12.400' height='12.700' fill='#f1f6fc' stroke='#5578bd' stroke-width='1.400'/><path d='M3 13.300 4.300 9.200 12.600 1.300 15.700 4.200 7.300 12.200Z' fill='#55b043' stroke='#2f7f28' stroke-width='0.800'/><path d='M12.600 1.300 14.200 -0.100 17.300 2.700 15.700 4.200Z' fill='#d43838'/><path d='M3 13.300 4.300 9.200 7.300 12.200Z' fill='#f0d8a8'/><path d='M3 13.300 3.500 11.800 4.600 12.800Z' fill='#333'/></svg></div>
<div style='position:absolute;left:109px;top:808.1px;width:8px;height:15px'><svg width='8' height='15' viewBox='0 0 8 15' style='opacity:0.22'><rect x='0.800' y='0.800' width='6.400' height='13.400' rx='3.200' fill='#cfd2d7' stroke='#84888f' stroke-width='1.100'/><rect x='3.200' y='3.500' width='1.600' height='8' rx='0.800' fill='#8f939a'/></svg></div>
<div style='position:absolute;left:121px;top:808.1px;width:14px;height:13px'><svg width='14' height='13' viewBox='0 0 14 13' style='opacity:0.28'><path d='M7 0.700C10.500 0.700 13.200 2.600 13.200 5.200 13.200 7.700 10.800 9.500 7.800 9.700L9.200 12.300 5.300 9.600C2.600 9.100 0.800 7.300 0.800 5.200 0.800 2.600 3.500 0.700 7 0.700Z' fill='#f1f2f4' stroke='#7d8087' stroke-width='1.100'/><path d='M4 4.200H10M4 6.200H9' stroke='#8a8d94' stroke-width='0.900'/></svg></div>
<span style="position:absolute;left:152.0px;top:808.6px;font:400 13px/17px 'Liberation Sans', sans-serif;color:#454a55;white-space:pre;letter-spacing:-0.39px;">143B9488P001</span>
<span style="position:absolute;left:261.0px;top:799.9px;font:400 13px/17px 'Liberation Sans', sans-serif;color:#454a55;white-space:pre;letter-spacing:-0.55px;">NUT - HEX; FLANGED; CARBON</span>
<span style="position:absolute;left:261.0px;top:817.4px;font:400 13px/17px 'Liberation Sans', sans-serif;color:#454a55;white-space:pre;letter-spacing:-1.20px;">STEEL</span>
<span style="position:absolute;left:588.0px;top:808.6px;font:400 13px/17px 'Liberation Sans', sans-serif;color:#454a55;white-space:pre;letter-spacing:-0.18px;">500062019</span>
<span style="position:absolute;left:697.0px;top:808.6px;font:400 13px/17px 'Liberation Sans', sans-serif;color:#454a55;white-space:pre;letter-spacing:0.04px;">p-00001</span>
<span style="position:absolute;left:1509.0px;top:808.6px;font:400 13px/17px 'Liberation Sans', sans-serif;color:#454a55;white-space:pre;letter-spacing:-0.42px;">Level 1</span>
<div style="position:absolute;left:41px;top:880.7px;width:1589px;height:1px;background:#d9dde8;"></div>
<div class='cb' style='left:52.500px;top:853.1px'></div>
<div style='position:absolute;left:87px;top:850.9px;width:18px;height:16px'><svg width='18' height='16' viewBox='0 0 18 16'><rect x='0.800' y='2.300' width='12.400' height='12.700' fill='#f1f6fc' stroke='#5578bd' stroke-width='1.400'/><path d='M3 13.300 4.300 9.200 12.600 1.300 15.700 4.200 7.300 12.200Z' fill='#55b043' stroke='#2f7f28' stroke-width='0.800'/><path d='M12.600 1.300 14.200 -0.100 17.300 2.700 15.700 4.200Z' fill='#d43838'/><path d='M3 13.300 4.300 9.200 7.300 12.200Z' fill='#f0d8a8'/><path d='M3 13.300 3.500 11.800 4.600 12.800Z' fill='#333'/></svg></div>
<div style='position:absolute;left:109px;top:851.6px;width:8px;height:15px'><svg width='8' height='15' viewBox='0 0 8 15' style='opacity:0.22'><rect x='0.800' y='0.800' width='6.400' height='13.400' rx='3.200' fill='#cfd2d7' stroke='#84888f' stroke-width='1.100'/><rect x='3.200' y='3.500' width='1.600' height='8' rx='0.800' fill='#8f939a'/></svg></div>
<div style='position:absolute;left:121px;top:851.6px;width:14px;height:13px'><svg width='14' height='13' viewBox='0 0 14 13' style='opacity:0.28'><path d='M7 0.700C10.500 0.700 13.200 2.600 13.200 5.200 13.200 7.700 10.800 9.500 7.800 9.700L9.200 12.300 5.300 9.600C2.600 9.100 0.800 7.300 0.800 5.200 0.800 2.600 3.500 0.700 7 0.700Z' fill='#f1f2f4' stroke='#7d8087' stroke-width='1.100'/><path d='M4 4.200H10M4 6.200H9' stroke='#8a8d94' stroke-width='0.900'/></svg></div>
<span style="position:absolute;left:152.0px;top:852.1px;font:400 13px/17px 'Liberation Sans', sans-serif;color:#454a55;white-space:pre;letter-spacing:-0.39px;">143B9488P001</span>
<span style="position:absolute;left:261.0px;top:843.4px;font:400 13px/17px 'Liberation Sans', sans-serif;color:#454a55;white-space:pre;letter-spacing:-0.55px;">NUT - HEX; FLANGED; CARBON</span>
<span style="position:absolute;left:261.0px;top:860.9px;font:400 13px/17px 'Liberation Sans', sans-serif;color:#454a55;white-space:pre;letter-spacing:-1.20px;">STEEL</span>
<span style="position:absolute;left:588.0px;top:852.1px;font:400 13px/17px 'Liberation Sans', sans-serif;color:#454a55;white-space:pre;letter-spacing:-0.18px;">500062019</span>
<span style="position:absolute;left:697.0px;top:852.1px;font:400 13px/17px 'Liberation Sans', sans-serif;color:#454a55;white-space:pre;letter-spacing:0.04px;">p-00001</span>
<span style="position:absolute;left:806.0px;top:852.1px;font:400 13px/17px 'Liberation Sans', sans-serif;color:#454a55;white-space:pre;letter-spacing:-0.29px;">7318.16</span>
<span style="position:absolute;left:1166.0px;top:852.1px;font:400 13px/17px 'Liberation Sans', sans-serif;color:#454a55;white-space:pre;letter-spacing:-0.39px;">N</span>
<span style="position:absolute;left:1509.0px;top:852.1px;font:400 13px/17px 'Liberation Sans', sans-serif;color:#454a55;white-space:pre;letter-spacing:-0.03px;">Final Approval</span>
<div style="position:absolute;left:41px;top:909.5px;width:1589px;height:1px;background:#d9dde8;"></div>
<div class='cb' style='left:52.500px;top:889.4px'></div>
<div style='position:absolute;left:87px;top:887.1px;width:18px;height:16px'><svg width='18' height='16' viewBox='0 0 18 16'><rect x='0.800' y='2.300' width='12.400' height='12.700' fill='#f1f6fc' stroke='#5578bd' stroke-width='1.400'/><path d='M3 13.300 4.300 9.200 12.600 1.300 15.700 4.200 7.300 12.200Z' fill='#55b043' stroke='#2f7f28' stroke-width='0.800'/><path d='M12.600 1.300 14.200 -0.100 17.300 2.700 15.700 4.200Z' fill='#d43838'/><path d='M3 13.300 4.300 9.200 7.300 12.200Z' fill='#f0d8a8'/><path d='M3 13.300 3.500 11.800 4.600 12.800Z' fill='#333'/></svg></div>
<div style='position:absolute;left:109px;top:887.9px;width:8px;height:15px'><svg width='8' height='15' viewBox='0 0 8 15' style='opacity:0.22'><rect x='0.800' y='0.800' width='6.400' height='13.400' rx='3.200' fill='#cfd2d7' stroke='#84888f' stroke-width='1.100'/><rect x='3.200' y='3.500' width='1.600' height='8' rx='0.800' fill='#8f939a'/></svg></div>
<div style='position:absolute;left:121px;top:887.9px;width:14px;height:13px'><svg width='14' height='13' viewBox='0 0 14 13' style='opacity:0.28'><path d='M7 0.700C10.500 0.700 13.200 2.600 13.200 5.200 13.200 7.700 10.800 9.500 7.800 9.700L9.200 12.300 5.300 9.600C2.600 9.100 0.800 7.300 0.800 5.200 0.800 2.600 3.500 0.700 7 0.700Z' fill='#f1f2f4' stroke='#7d8087' stroke-width='1.100'/><path d='M4 4.200H10M4 6.200H9' stroke='#8a8d94' stroke-width='0.900'/></svg></div>
<span style="position:absolute;left:152.0px;top:888.4px;font:400 13px/17px 'Liberation Sans', sans-serif;color:#454a55;white-space:pre;letter-spacing:-0.39px;">143B9506P001</span>
<span style="position:absolute;left:261.0px;top:888.4px;font:400 13px/17px 'Liberation Sans', sans-serif;color:#454a55;white-space:pre;letter-spacing:-0.84px;">WASHER - STEEL, HUB</span>
<span style="position:absolute;left:588.0px;top:888.4px;font:400 13px/17px 'Liberation Sans', sans-serif;color:#454a55;white-space:pre;letter-spacing:-0.18px;">500062020</span>
<span style="position:absolute;left:697.0px;top:888.4px;font:400 13px/17px 'Liberation Sans', sans-serif;color:#454a55;white-space:pre;letter-spacing:0.04px;">p-00001</span>
<span style="position:absolute;left:1509.0px;top:888.4px;font:400 13px/17px 'Liberation Sans', sans-serif;color:#454a55;white-space:pre;letter-spacing:-0.42px;">Level 1</span>
<div style="position:absolute;left:41px;top:938.8px;width:1589px;height:1px;background:#d9dde8;"></div>
<div class='cb' style='left:52.500px;top:918.4px'></div>
<div style='position:absolute;left:87px;top:916.1px;width:18px;height:16px'><svg width='18' height='16' viewBox='0 0 18 16'><rect x='0.800' y='2.300' width='12.400' height='12.700' fill='#f1f6fc' stroke='#5578bd' stroke-width='1.400'/><path d='M3 13.300 4.300 9.200 12.600 1.300 15.700 4.200 7.300 12.200Z' fill='#55b043' stroke='#2f7f28' stroke-width='0.800'/><path d='M12.600 1.300 14.200 -0.100 17.300 2.700 15.700 4.200Z' fill='#d43838'/><path d='M3 13.300 4.300 9.200 7.300 12.200Z' fill='#f0d8a8'/><path d='M3 13.300 3.500 11.800 4.600 12.800Z' fill='#333'/></svg></div>
<div style='position:absolute;left:109px;top:916.9px;width:8px;height:15px'><svg width='8' height='15' viewBox='0 0 8 15' style='opacity:0.22'><rect x='0.800' y='0.800' width='6.400' height='13.400' rx='3.200' fill='#cfd2d7' stroke='#84888f' stroke-width='1.100'/><rect x='3.200' y='3.500' width='1.600' height='8' rx='0.800' fill='#8f939a'/></svg></div>
<div style='position:absolute;left:121px;top:916.9px;width:14px;height:13px'><svg width='14' height='13' viewBox='0 0 14 13' style='opacity:0.28'><path d='M7 0.700C10.500 0.700 13.200 2.600 13.200 5.200 13.200 7.700 10.800 9.500 7.800 9.700L9.200 12.300 5.300 9.600C2.600 9.100 0.800 7.300 0.800 5.200 0.800 2.600 3.500 0.700 7 0.700Z' fill='#f1f2f4' stroke='#7d8087' stroke-width='1.100'/><path d='M4 4.200H10M4 6.200H9' stroke='#8a8d94' stroke-width='0.900'/></svg></div>
<span style="position:absolute;left:152.0px;top:917.4px;font:400 13px/17px 'Liberation Sans', sans-serif;color:#454a55;white-space:pre;letter-spacing:-0.39px;">143B9506P001</span>
<span style="position:absolute;left:261.0px;top:917.4px;font:400 13px/17px 'Liberation Sans', sans-serif;color:#454a55;white-space:pre;letter-spacing:-0.84px;">WASHER - STEEL, HUB</span>
<span style="position:absolute;left:588.0px;top:917.4px;font:400 13px/17px 'Liberation Sans', sans-serif;color:#454a55;white-space:pre;letter-spacing:-0.18px;">500062020</span>
<span style="position:absolute;left:697.0px;top:917.4px;font:400 13px/17px 'Liberation Sans', sans-serif;color:#454a55;white-space:pre;letter-spacing:0.04px;">p-00001</span>
<span style="position:absolute;left:806.0px;top:917.4px;font:400 13px/17px 'Liberation Sans', sans-serif;color:#454a55;white-space:pre;letter-spacing:-0.29px;">7318.22</span>
<span style="position:absolute;left:1166.0px;top:917.4px;font:400 13px/17px 'Liberation Sans', sans-serif;color:#454a55;white-space:pre;letter-spacing:-0.39px;">N</span>
<span style="position:absolute;left:1509.0px;top:917.4px;font:400 13px/17px 'Liberation Sans', sans-serif;color:#454a55;white-space:pre;letter-spacing:-0.03px;">Final Approval</span>
<div style="position:absolute;left:1628px;top:537.8px;width:1.5px;height:4px;background:#f4f2b8;"></div>
<div style="position:absolute;left:1628px;top:591.8px;width:1.5px;height:4px;background:#f4f2b8;"></div>
<div style="position:absolute;left:1628px;top:645.9px;width:1.5px;height:4px;background:#f4f2b8;"></div>
<div style="position:absolute;left:1628px;top:699.5px;width:1.5px;height:4px;background:#f4f2b8;"></div>
<div style="position:absolute;left:1628px;top:753.35px;width:1.5px;height:4px;background:#f4f2b8;"></div>
<div style="position:absolute;left:1628px;top:814.35px;width:1.5px;height:4px;background:#f4f2b8;"></div>
<div style="position:absolute;left:1628px;top:857.85px;width:1.5px;height:4px;background:#f4f2b8;"></div>
<div style="position:absolute;left:1628px;top:894.1px;width:1.5px;height:4px;background:#f4f2b8;"></div>
<div style="position:absolute;left:1628px;top:923.15px;width:1.5px;height:4px;background:#f4f2b8;"></div>
<div style="position:absolute;left:1633px;top:478px;width:9.5px;height:196px;background:#8c8c8c;border-radius:5px;"></div>
<div style="position:absolute;left:0px;top:943px;width:1657px;height:16px;background:#fff;"></div>
<svg style='left:5px;top:946px' width='8' height='9' viewBox='0 0 8 9'><path d='M7.500 0.500V8.500L0.500 4.500Z' fill='#8a8a8a'/></svg>
<div style="position:absolute;left:20px;top:945.5px;width:1264px;height:9px;background:#8c8c8c;border-radius:5px;"></div>
<svg style='left:1644px;top:946px' width='8' height='9' viewBox='0 0 8 9'><path d='M0.500 0.500V8.500L7.500 4.500Z' fill='#8a8a8a'/></svg>
<div style="position:absolute;left:1657px;top:201px;width:17px;height:758px;background:#fff;"></div>
<svg style='left:1660px;top:206px' width='11' height='8' viewBox='0 0 11 8'><path d='M0.500 7.500H10.500L5.500 0.500Z' fill='#8a8a8a'/></svg>
<div style="position:absolute;left:1661.2px;top:221px;width:9.2px;height:551px;background:#8c8c8c;border-radius:5px;"></div>
<svg style='left:1660px;top:929px' width='11' height='8' viewBox='0 0 11 8'><path d='M0.500 0.500H10.500L5.500 7.500Z' fill='#8a8a8a'/></svg>

<div style="position:absolute;left:1495px;top:474px;width:170px;height:48px;background:#fff;border-radius:7px;box-shadow:0 2px 6px rgba(0,0,0,.25);"></div>
<svg style='left:1509.500px;top:464.500px' width='17' height='10' viewBox='0 0 17 10'><path d='M0 10 8.500 0.500 17 10Z' fill='#fbfdff'/></svg>
<span style="position:absolute;left:1509.0px;top:488.5px;font:700 13.5px/18px 'Liberation Sans', sans-serif;color:#1e2b4a;white-space:pre;letter-spacing:-0.15px;">final</span>
<svg style='left:1553.500px;top:453px' width='7' height='14' viewBox='0 0 9 18'><path d='M1 1.500C3 1.500 4 2 4.500 3 5 2 6 1.500 8 1.500M4.500 3V15M1 16.500C3 16.500 4 16 4.500 15 5 16 6 16.500 8 16.500M3 9H6' stroke='#222' stroke-width='1.200' fill='none'/></svg>
<div style="position:absolute;left:0px;top:959px;width:1674px;height:53px;background:linear-gradient(90deg,#1a1c20 0,#1d1d1e 5%,#25211a 10%,#2e2819 16%,#28251d 21%,#20222a 27%,#1c2027 55%,#1d2229 100%);"></div>
<svg style='left:22px;top:965px' width='34' height='36' viewBox='0 0 34 36'><defs><radialGradient id='sun' cx='.35' cy='.35' r='.8'><stop offset='0' stop-color='#ffd34a'/><stop offset='.6' stop-color='#f7941d'/><stop offset='1' stop-color='#e4571e'/></radialGradient></defs><circle cx='12.500' cy='19' r='10.800' fill='url(#sun)'/><circle cx='21' cy='8.500' r='7' fill='#c42b2b'/><text x='21' y='12.300' font-family='Liberation Sans, sans-serif' font-size='10.500' fill='#fff' text-anchor='middle'>1</text></svg>
<span style="position:absolute;left:56.0px;top:967.0px;font:400 13px/17px 'Liberation Sans', sans-serif;color:#f2f2f2;white-space:pre;letter-spacing:-0.90px;">18°F</span>
<span style="position:absolute;left:56.0px;top:984.5px;font:400 13px/17px 'Liberation Sans', sans-serif;color:#e4e4e4;white-space:pre;letter-spacing:-0.17px;">Sunny</span>
<svg style='left:414px;top:972px' width='26' height='26' viewBox='0 0 26 26'><defs><linearGradient id='wl' x1='0' y1='0' x2='1' y2='1'><stop offset='0' stop-color='#5cc8f5'/><stop offset='1' stop-color='#1689d8'/></linearGradient></defs><g fill='url(#wl)'><rect x='0' y='0' width='12.300' height='12.300' rx='0.800'/><rect x='13.700' y='0' width='12.300' height='12.300' rx='0.800'/><rect x='0' y='13.700' width='12.300' height='12.300' rx='0.800'/><rect x='13.700' y='13.700' width='12.300' height='12.300' rx='0.800'/></g></svg>
<div style="position:absolute;left:455px;top:968px;width:238px;height:33px;background:linear-gradient(90deg,#ececec,#dedede 60%,#d6d4d4);border-radius:17px;"></div>
<svg style='left:467px;top:976px' width='17' height='17' viewBox='0 0 17 17'><circle cx='7' cy='7' r='5.600' fill='none' stroke='#222' stroke-width='1.600'/><path d='M11 11 16 16' stroke='#222' stroke-width='1.800'/></svg>
<span style="position:absolute;left:494.0px;top:975.0px;font:400 15px/20px 'Liberation Sans', sans-serif;color:#4c4c4c;white-space:pre;letter-spacing:-0.42px;">Search</span>
<svg style='left:638px;top:972px' width='46' height='27' viewBox='0 0 46 27'><g><circle cx='8' cy='9' r='3.300' fill='#c0271f'/><circle cx='13' cy='6' r='3.300' fill='#d8362a'/><circle cx='11' cy='13' r='3.300' fill='#b8221c'/><circle cx='17' cy='11' r='3.300' fill='#cf2e25'/><circle cx='5' cy='15' r='2.800' fill='#b8221c'/><path d='M10 16 20 25M14 15 21 23' stroke='#3e7a2a' stroke-width='2.200'/></g><rect x='24' y='9' width='20' height='17' rx='1.500' fill='#c9353f'/><rect x='23' y='7' width='22' height='6' rx='1.200' fill='#e14b54'/><rect x='32' y='7' width='4' height='19' fill='#f3b3b7'/><path d='M34 7C30 1 26 3 29 7ZM34 7C38 1 42 3 39 7Z' fill='#e14b54'/></svg>
<svg style='left:707px;top:972px' width='27' height='25' viewBox='0 0 27 25'><rect x='8' y='1' width='18' height='15' rx='1.500' fill='#d8d8d8'/><rect x='1' y='8' width='18' height='15' rx='1.500' fill='#8f9296' opacity='.920'/></svg>
<svg style='left:754px;top:972px' width='27' height='25' viewBox='0 0 27 25'><rect x='8' y='1' width='18' height='20' rx='2' fill='#1a7ad4'/><rect x='14' y='4' width='12' height='8' fill='#50b5f5'/><path d='M8 12 17 18 26 12V21A2 2 0 0 1 24 23H10A2 2 0 0 1 8 21Z' fill='#2a93e8'/><rect x='0.500' y='6' width='13' height='13' rx='2' fill='#0f5fb5'/><circle cx='7' cy='12.500' r='3.300' fill='none' stroke='#fff' stroke-width='1.700'/></svg>
<div style="position:absolute;left:765.0px;top:1003px;width:6px;height:2.5px;background:#8c8f94;border-radius:1.500px;"></div>
<div style="position:absolute;left:794px;top:963px;width:44px;height:46px;background:rgba(255,255,255,.065);border-radius:5px;"></div>
<svg style='left:803px;top:971px' width='27' height='27' viewBox='0 0 27 27'><circle cx='13.500' cy='13.500' r='13' fill='#fff'/><path d='M13.500 0.500A13 13 0 0 1 24.760 7H13.500A6.500 6.500 0 0 0 7.870 10.250L2.240 7A13 13 0 0 1 13.500 0.500Z' fill='#e33b2e'/><path d='M24.760 7A13 13 0 0 1 13.500 26.500L19.130 16.750A6.500 6.500 0 0 0 19.130 10.250L13.500 7Z' fill='#fbc116'/><path d='M13.500 26.500A13 13 0 0 1 2.240 7L7.870 16.750A6.500 6.500 0 0 0 13.500 20L19.130 16.750Z' fill='#2ba24c'/><circle cx='13.500' cy='13.500' r='6' fill='#fff'/><circle cx='13.500' cy='13.500' r='4.800' fill='#3b82f0'/></svg>
<div style="position:absolute;left:807.5px;top:1003px;width:17px;height:2.5px;background:#55b8ee;border-radius:1.500px;"></div>
<svg style='left:851px;top:967px' width='32' height='32' viewBox='0 0 32 32'><circle cx='21' cy='9' r='3.600' fill='#7b83eb'/><circle cx='12.500' cy='8' r='4.300' fill='#5a62c9'/><rect x='14' y='13' width='14' height='13' rx='3' fill='#7b83eb'/><rect x='6' y='13' width='14' height='16' rx='3' fill='#5059c9'/><rect x='0.500' y='12' width='13' height='13' rx='2' fill='#464eb8'/><path d='M4 15.500H10M7 15.500V22' stroke='#fff' stroke-width='1.600'/><circle cx='24' cy='7.500' r='7' fill='#c4314b' stroke='#fff' stroke-width='1.200'/><path d='M20.500 7.500H27.500' stroke='#fff' stroke-width='1.700'/></svg>
<div style="position:absolute;left:861.0px;top:1003px;width:6px;height:2.5px;background:#8c8f94;border-radius:1.500px;"></div>
<svg style='left:899px;top:972px' width='26' height='25' viewBox='0 0 26 25'><rect x='6' y='0.500' width='19' height='24' rx='2' fill='#2b7cd3'/><rect x='6' y='0.500' width='19' height='8' fill='#41a5ee'/><rect x='6' y='16.500' width='19' height='8' fill='#103f91'/><rect x='0.500' y='9' width='13' height='13' rx='2' fill='#185abd'/><path d='M3 12.500 5 19 7 14 9 19 11 12.500' stroke='#fff' stroke-width='1.300' fill='none'/></svg>
<div style="position:absolute;left:908.0px;top:1003px;width:6px;height:2.5px;background:#8c8f94;border-radius:1.500px;"></div>
<svg style='left:947px;top:972px' width='26' height='25' viewBox='0 0 26 25'><rect x='6' y='0.500' width='19' height='24' rx='2' fill='#21a366'/><rect x='15.500' y='0.500' width='9.500' height='8' fill='#33c481'/><rect x='6' y='16.500' width='19' height='8' fill='#185c37'/><rect x='0.500' y='9' width='13' height='13' rx='2' fill='#107c41'/><path d='M4 12.500 10 19M10 12.500 4 19' stroke='#fff' stroke-width='1.500'/></svg>
<div style="position:absolute;left:956.0px;top:1003px;width:6px;height:2.5px;background:#8c8f94;border-radius:1.500px;"></div>
<svg style='left:995px;top:972px' width='26' height='26' viewBox='0 0 26 26'><rect width='26' height='26' rx='1.500' fill='#b3141d'/><rect x='1.500' y='1.500' width='23' height='23' fill='#c4161f'/><text x='13' y='20' font-family='Liberation Sans, sans-serif' font-size='19' font-weight='700' font-style='italic' fill='#fff' text-anchor='middle'>Fz</text></svg>
<div style="position:absolute;left:1004.0px;top:1003px;width:6px;height:2.5px;background:#8c8f94;border-radius:1.500px;"></div>
<svg style='left:1044px;top:973px' width='24' height='24' viewBox='0 0 24 24'><rect width='24' height='24' rx='5' fill='#b30b1e'/><path d='M5 18C8 16 10.500 11 11.500 6 12 4 13.500 4.500 13 7 12.500 11 15 15 19 15.500 21 16 20 17.500 18 17 14 16 9 16.500 6 19 4.500 20 4 18.800 5 18Z' fill='none' stroke='#fff' stroke-width='1.300'/></svg>
<div style="position:absolute;left:1082px;top:963px;width:43px;height:46px;background:#6e3a4c;border-radius:5px;"></div>
<svg style='left:1092px;top:972px' width='24' height='25' viewBox='0 0 24 25'><path d='M0.500 0.500H23.500V14L13 24.500H0.500Z' fill='#f2d10f'/><path d='M0.500 0.500H23.500V5H0.500Z' fill='#e6b800' opacity='.550'/><path d='M23.500 14 13 24.500V14Z' fill='#3b3a38'/></svg>
<div style="position:absolute;left:1100.0px;top:1003px;width:7px;height:2.5px;background:#f06aa0;border-radius:1.500px;"></div>
<svg style='left:1137px;top:972px' width='28' height='25' viewBox='0 0 28 25'><path d='M0.500 3A2 2 0 0 1 2.500 1H9L12 4H25.500A2 2 0 0 1 27.500 6V8H0.500Z' fill='#e3a21a'/><rect x='0.500' y='6' width='27' height='18.500' rx='2' fill='#f8cf4b'/><rect x='6' y='15' width='16' height='9.500' rx='1' fill='#2279c9'/><rect x='10' y='18' width='8' height='2.200' rx='1' fill='#0f4f96'/></svg>
<div style="position:absolute;left:1148.0px;top:1003px;width:6px;height:2.5px;background:#8c8f94;border-radius:1.500px;"></div>
<svg style='left:1188px;top:971px' width='22' height='28' viewBox='0 0 22 28'><rect x='0.500' y='0.500' width='21' height='27' rx='2.500' fill='#5d6a77'/><rect x='3' y='3' width='16' height='5.500' fill='#39b0c7'/><g fill='#e9edf1'><rect x='3' y='11' width='4.300' height='4'/><rect x='8.800' y='11' width='4.300' height='4'/><rect x='3' y='16.500' width='4.300' height='4'/><rect x='8.800' y='16.500' width='4.300' height='4'/><rect x='3' y='22' width='4.300' height='3.500'/><rect x='8.800' y='22' width='4.300' height='3.500'/></g><rect x='14.700' y='11' width='4.300' height='14.500' fill='#1c4f9c'/></svg>
<svg style='left:1233px;top:971px' width='29' height='28' viewBox='0 0 29 28'><rect x='0.500' y='0.500' width='19' height='17' rx='2' fill='#e9e6e4'/><rect x='5' y='5' width='10' height='8.500' fill='none' stroke='#b53a2c' stroke-width='1.500' stroke-dasharray='2 1.300'/><path d='M12 8 22 22M24 12 14 22' stroke='#9aa0a6' stroke-width='2'/><circle cx='13.500' cy='24' r='2.600' fill='none' stroke='#2a8fe0' stroke-width='1.600'/><circle cx='24' cy='23' r='2.600' fill='none' stroke='#2a8fe0' stroke-width='1.600'/></svg>
<svg style='left:1411px;top:980px' width='13' height='8' viewBox='0 0 13 8'><path d='M1 7 6.500 1.500 12 7' stroke='#f0f0f0' stroke-width='1.600' fill='none'/></svg>
<div style="position:absolute;left:1435px;top:963px;width:35px;height:43px;background:#4fb7ec;border-radius:4px;"></div>
<svg style='left:1445px;top:975px' width='15' height='21' viewBox='0 0 15 21'><rect x='4' y='0.500' width='7' height='12' rx='3.500' fill='#10151c'/><path d='M1.500 9.500A6 6 0 0 0 13.500 9.500M7.500 15.500V19.500' stroke='#10151c' stroke-width='1.500' fill='none'/></svg>
<svg style='left:1477px;top:977px' width='20' height='15' viewBox='0 0 20 15'><g fill='none' stroke='#f2f2f2' stroke-width='1.500'><path d='M1 5.500C6 0.500 14 0.500 19 5.500'/><path d='M4 8.500C7.500 5 12.500 5 16 8.500'/><path d='M7 11.300C8.800 9.600 11.200 9.600 13 11.300'/></g><circle cx='10' cy='13.300' r='1.400' fill='#f2f2f2'/></svg>
<svg style='left:1503px;top:977px' width='21' height='15' viewBox='0 0 21 15'><path d='M1 5H4L8.500 1.200V13.800L4 10H1Z' fill='none' stroke='#f2f2f2' stroke-width='1.300' stroke-linejoin='round'/><path d='M11 5C12.300 6.500 12.300 8.500 11 10' stroke='#f2f2f2' stroke-width='1.200' fill='none'/><path d='M13.500 3C16 5.500 16 9.500 13.500 12' stroke='#8d9093' stroke-width='1.200' fill='none'/><path d='M16 1.200C19.500 4.800 19.500 10.200 16 13.800' stroke='#5d6165' stroke-width='1.200' fill='none'/></svg>
<svg style='left:1530px;top:975px' width='21' height='16' viewBox='0 0 21 16'><rect x='2' y='4.500' width='15.500' height='10' rx='2.500' fill='none' stroke='#f2f2f2' stroke-width='1.400'/><rect x='18.300' y='7.500' width='2' height='4' rx='1' fill='#f2f2f2'/><rect x='4.500' y='7' width='10.500' height='5' rx='1' fill='#f2f2f2'/><path d='M1 8 5 1.500 5.500 6' stroke='#f2f2f2' stroke-width='1.300' fill='none'/></svg>
<span style="position:absolute;left:1579.0px;top:967.0px;font:400 13px/17px 'Liberation Sans', sans-serif;color:#f2f2f2;white-space:pre;letter-spacing:-0.06px;">2:33 PM</span>
<span style="position:absolute;left:1566.0px;top:984.5px;font:400 13px/17px 'Liberation Sans', sans-serif;color:#f2f2f2;white-space:pre;letter-spacing:0.35px;">1/30/2026</span>
<svg style='left:1634px;top:975px' width='20' height='20' viewBox='0 0 20 20'><path d='M3 14.500C5 12.500 4.500 9 5.500 7 6.500 4.500 8.500 3.800 10 3.800 12 3.800 14 5 14.500 7.500 15 10 14.500 12.500 16.500 14.500Z' fill='#f2f2f2'/><path d='M7.500 16.500A2.500 2.500 0 0 0 12.500 16.500Z' fill='#f2f2f2'/><text x='9.700' y='12.500' font-family='Liberation Sans, sans-serif' font-size='7' font-weight='700' fill='#1d2229' text-anchor='middle'>z</text><text x='15.500' y='6.500' font-family='Liberation Sans, sans-serif' font-size='7.500' font-weight='700' fill='#f2f2f2' text-anchor='middle'>z</text></svg>
<div style="position:absolute;left:1711.5px;top:343px;width:165px;height:165px;background:#f3d8da;border-radius:50%;"></div>
<span style="position:absolute;left:1752.7px;top:392.5px;font:400 64px/68px 'DejaVu Sans', 'Liberation Sans', sans-serif;color:#6e2c3c;white-space:pre;letter-spacing:-1.20px;-webkit-text-stroke:1.100px #6e2c3c;">SR</span>
<div style="position:absolute;left:1690px;top:508px;width:136px;height:25.5px;background:#5f62ab;border-radius:3px;"></div>
<span style="position:absolute;left:1695.0px;top:510.5px;font:400 15px/20px 'DejaVu Sans', 'Liberation Sans', sans-serif;color:#fff;white-space:pre;letter-spacing:-0.17px;">Stefania Ramirez</span>
<svg style='left:1711px;top:567.500px' width='165' height='165' viewBox='0 0 165 165'><defs><clipPath id='vc'><circle cx='82.500' cy='82.500' r='82.500'/></clipPath><filter id='vb' x='-20%' y='-20%' width='140%' height='140%'><feGaussianBlur stdDeviation='2.400'/></filter><filter id='vb2' x='-20%' y='-20%' width='140%' height='140%'><feGaussianBlur stdDeviation='1.100'/></filter><radialGradient id='vh' cx='.42' cy='.36' r='.78'><stop offset='0' stop-color='#9c6b43'/><stop offset='.5' stop-color='#7b4d2b'/><stop offset='.85' stop-color='#4a2c17'/><stop offset='1' stop-color='#2a180d'/></radialGradient><radialGradient id='vf' cx='.5' cy='.42' r='.62'><stop offset='0' stop-color='#d4977b'/><stop offset='.6' stop-color='#c5846a'/><stop offset='1' stop-color='#9a5d42'/></radialGradient></defs><g clip-path='url(#vc)'><rect width='165' height='165' fill='#150d0c'/><g filter='url(#vb)'><path d='M-5 70 C-2 30 30 2 68 2 C96 2 114 20 124 50 C132 78 146 98 160 112 C152 140 135 158 110 168 L20 168 C5 150 -5 115 -5 70Z' fill='url(#vh)'/><path d='M98 0 H170 V112 C152 104 138 84 130 56 C124 32 112 12 98 0Z' fill='#130b0d'/><ellipse cx='132' cy='22' rx='9' ry='5' fill='#4a3030'/><ellipse cx='146' cy='40' rx='7' ry='4' fill='#5a4038'/><ellipse cx='152' cy='96' rx='5' ry='9' fill='#3a1418'/><path d='M0 108 C12 122 28 134 46 142 L50 170 H0Z' fill='#1e120b'/><path d='M2 50 C-2 80 2 108 16 122 C12 100 12 76 16 52Z' fill='#3e2413'/><ellipse cx='56' cy='72' rx='31' ry='45' fill='url(#vf)'/><path d='M22 44 C30 16 70 8 92 28 C104 42 110 70 116 100 C102 84 94 58 76 40 C58 30 36 36 22 44Z' fill='#94623a'/><path d='M52 12 C66 6 84 10 94 24 C84 18 68 14 52 12Z' fill='#b98d62'/><path d='M10 62 C6 92 12 118 32 132 C26 110 24 84 28 58Z' fill='#774826'/><path d='M90 60 C104 80 114 108 142 120 C130 138 108 150 88 146 C92 120 90 90 90 60Z' fill='#84552f'/><path d='M100 92 C110 108 122 116 138 120 C126 128 110 124 100 112Z' fill='#5c371d'/><path d='M106 132 C120 136 134 130 146 120 C140 142 124 154 104 158Z' fill='#4a2b16'/><path d='M66 126 C82 124 96 132 104 150 L96 168 H70Z' fill='#6a4024'/><path d='M38 118 C46 126 60 128 72 122 C70 134 64 140 56 142 C48 138 42 130 38 118Z' fill='#a9694c'/></g><g filter='url(#vb2)'><path d='M50 134 L58 128 L66 158 L56 164 L51 150Z' fill='#e9e6e2'/><path d='M44 94 C52 100 66 100 74 92 C70 103 50 105 44 94Z' fill='#efe6e0'/><path d='M42 92 C52 97 66 96 76 90' stroke='#8a4636' stroke-width='1.600' fill='none'/><ellipse cx='36' cy='64' rx='6' ry='2.300' fill='#553224'/><ellipse cx='76' cy='62' rx='6' ry='2.300' fill='#553224'/><path d='M30 59 C34 57 40 57 43 59M70 57 C74 55 80 55 83 58' stroke='#7a4a32' stroke-width='1.300' fill='none'/><path d='M52 80 C54 84 60 85 64 82' stroke='#a86348' stroke-width='2' fill='none'/></g></g></svg>
<span style="position:absolute;left:1695.0px;top:735.0px;font:400 15px/20px 'DejaVu Sans', 'Liberation Sans', sans-serif;color:#fff;white-space:pre;letter-spacing:0.06px;">Vivian White</span>
<div style="position:absolute;left:8px;top:1050px;width:136px;height:25.5px;background:#5f62ab;border-radius:3px;"></div>
<span style="position:absolute;left:13.0px;top:1052.5px;font:400 15px/20px 'DejaVu Sans', 'Liberation Sans', sans-serif;color:#fff;white-space:pre;letter-spacing:-0.17px;">Stefania Ramirez</span>
</body></html>
